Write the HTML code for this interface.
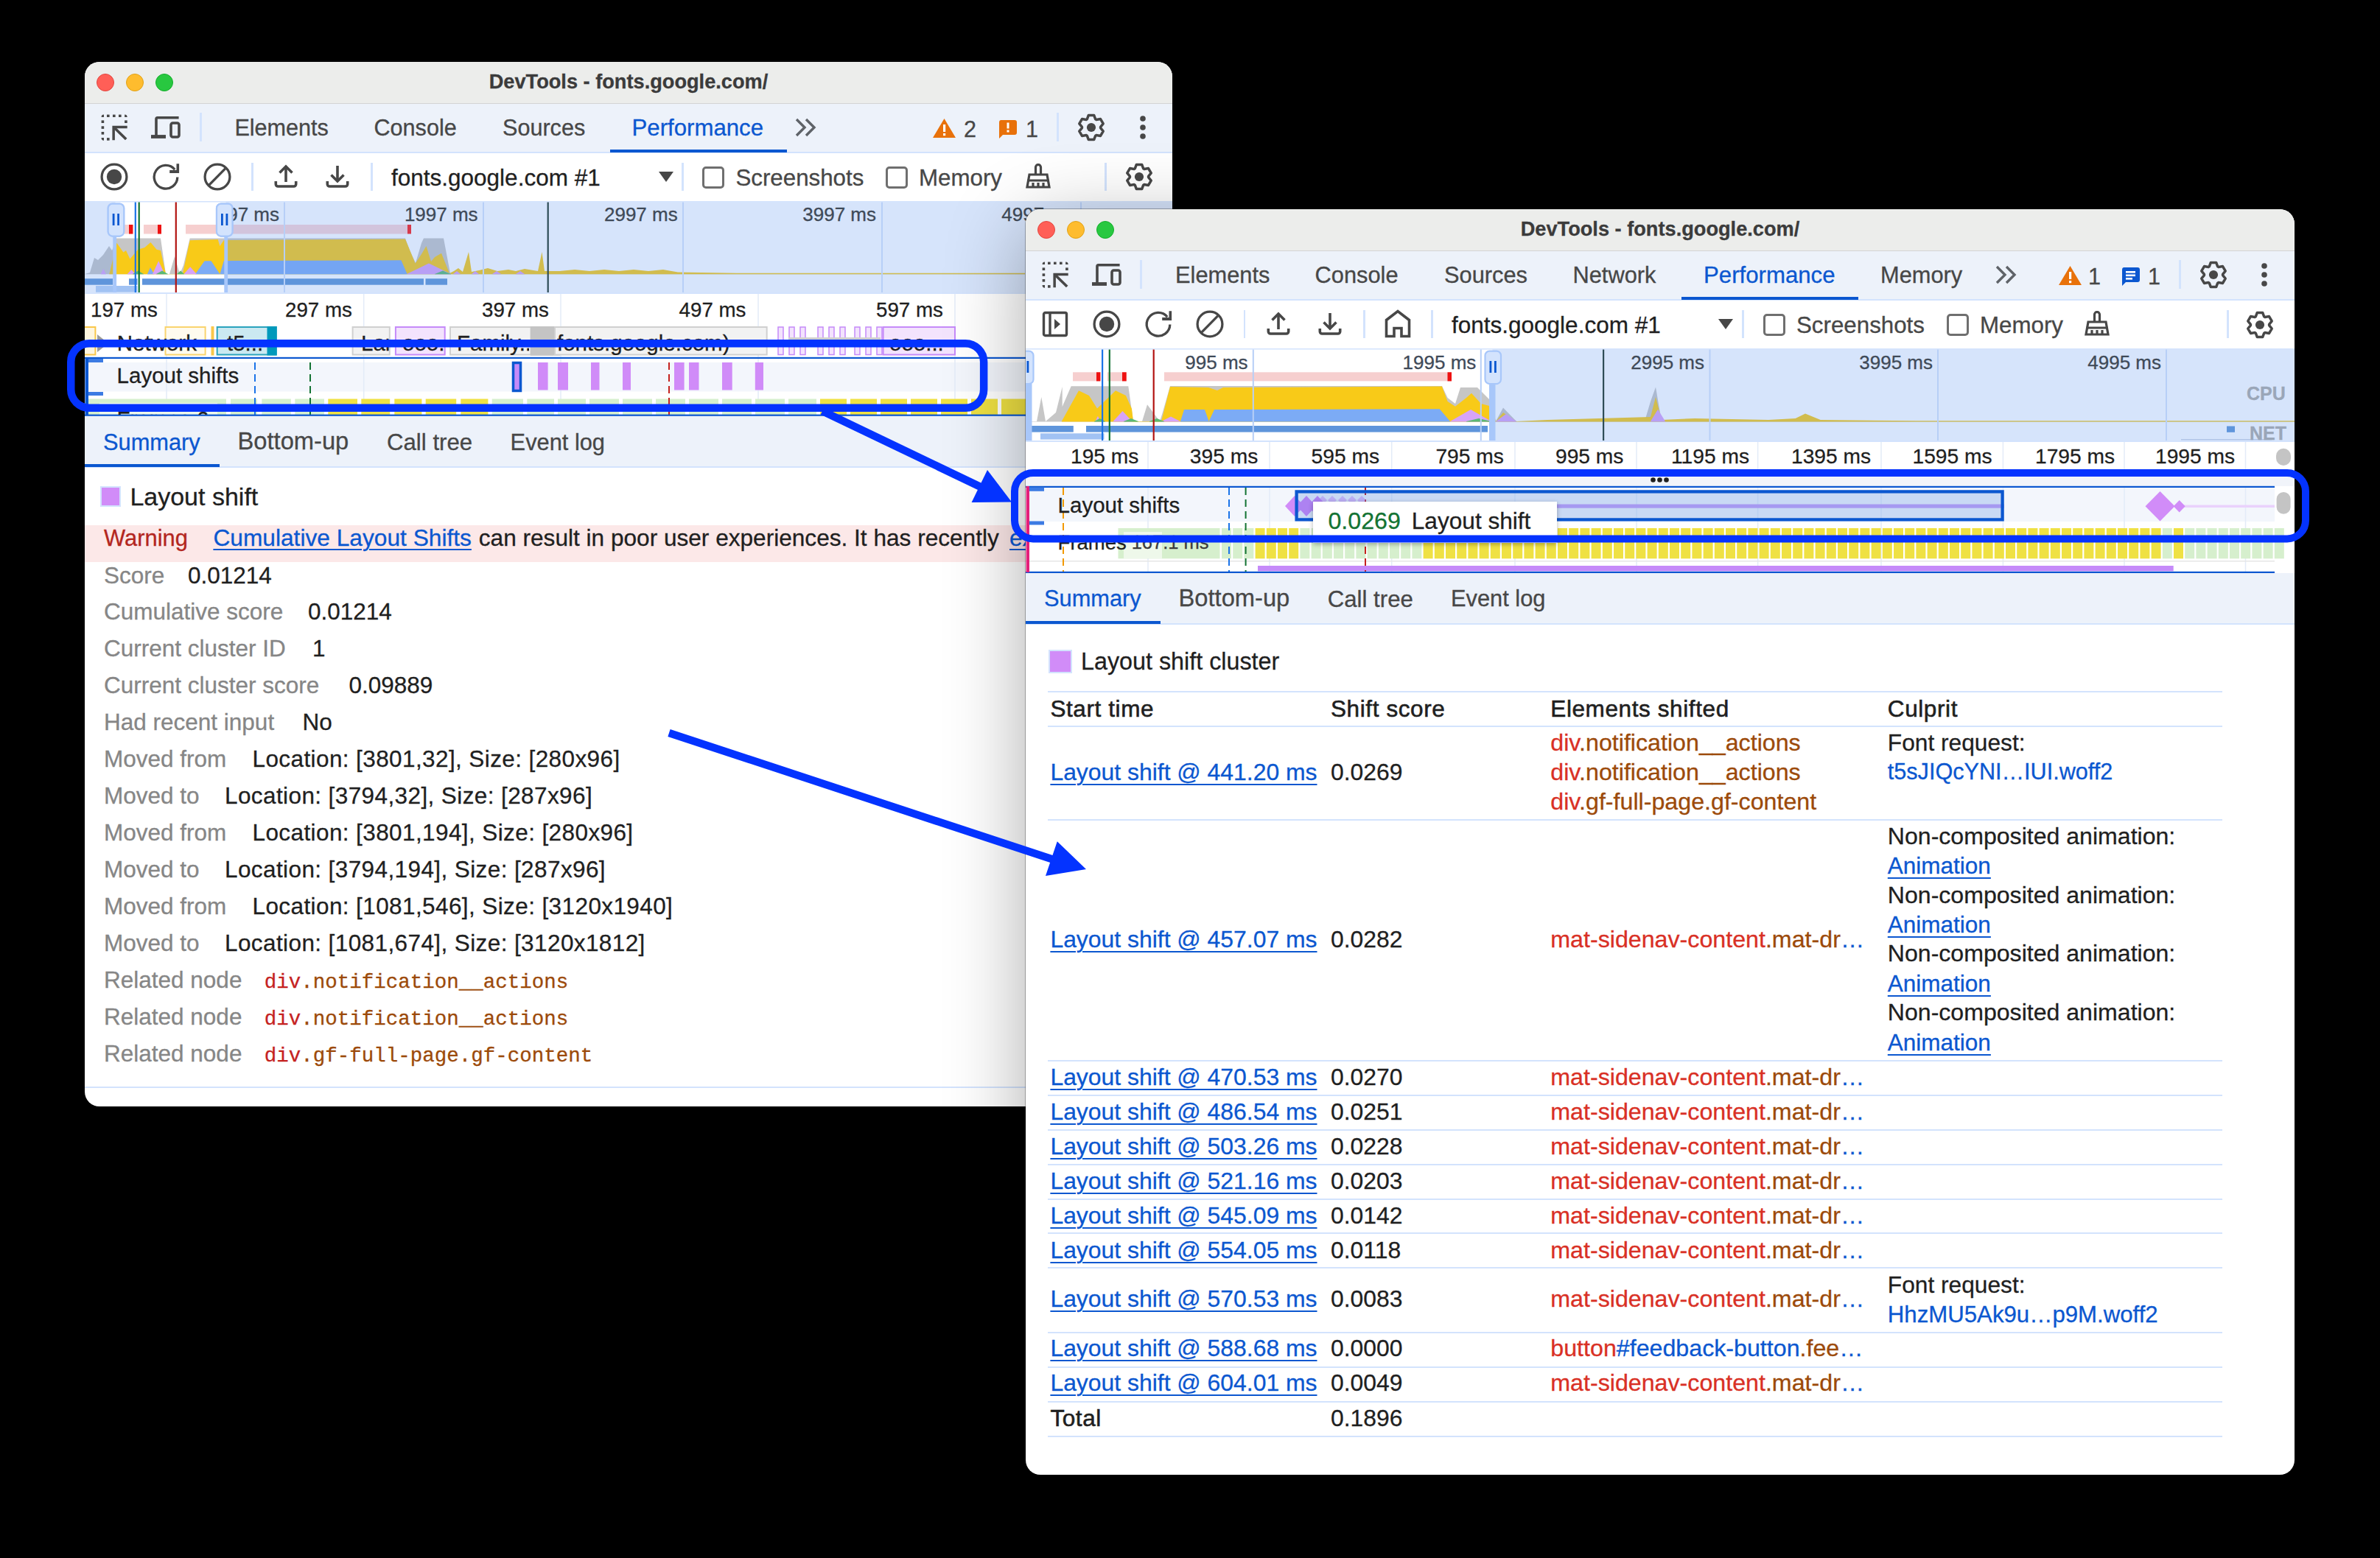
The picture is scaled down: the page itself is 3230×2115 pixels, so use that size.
<!DOCTYPE html><html><head><meta charset="utf-8"><style>html,body{margin:0;padding:0;width:3230px;height:2115px;overflow:hidden;background:#000}.t{position:absolute;line-height:1;white-space:nowrap;-webkit-text-stroke:0.3px currentColor}</style></head><body><div style="position:absolute;left:0;top:0;width:3230px;height:2115px;background:#000"></div>
<div style="position:absolute;left:115px;top:84px;width:1476px;height:1418px;border-radius:20px;background:#fff;overflow:hidden;z-index:1;"><div style="position:absolute;left:-115px;top:-84px;width:3230px;height:2115px">
<div style="position:absolute;left:115px;top:84px;width:1476px;height:55.5px;background:#ecedeb;"></div>
<div style="position:absolute;left:115px;top:139.5px;width:1476px;height:1.5px;background:#d4d4d4;"></div>
<div class="t" style="left:-647.0px;width:3000px;text-align:center;top:97px;font-size:27.2px;color:#3b3b3b;font-weight:bold;font-family:'Liberation Sans', sans-serif;">DevTools - fonts.google.com/</div>
<div style="position:absolute;left:131px;top:100px;width:24px;height:24px;box-sizing:border-box;border-radius:50%;background:#ff5f57;border:0.8px solid #e2463f"></div>
<div style="position:absolute;left:171px;top:100px;width:24px;height:24px;box-sizing:border-box;border-radius:50%;background:#febc2e;border:0.8px solid #e1a116"></div>
<div style="position:absolute;left:211px;top:100px;width:24px;height:24px;box-sizing:border-box;border-radius:50%;background:#28c840;border:0.8px solid #14ae2b"></div>
<div style="position:absolute;left:115px;top:141px;width:1476px;height:65px;background:#edf2fa;"></div>
<div style="position:absolute;left:115px;top:206px;width:1476px;height:2px;background:#d3e3fd;"></div>
<div style="position:absolute;left:115px;top:208px;width:1476px;height:64px;background:#fff;"></div>
<svg style="position:absolute;left:137px;top:155px;" width="36" height="36" viewBox="0 0 36 36"><g fill="#474747"><rect x="8" y="0.6" width="3.6" height="3.4"/><rect x="16" y="0.6" width="3.6" height="3.4"/><rect x="24" y="0.6" width="3.6" height="3.4"/><rect x="0.6" y="8.4" width="3.6" height="3.6"/><rect x="0.6" y="16.3" width="3.6" height="3.6"/><rect x="0.6" y="24" width="3.6" height="3.6"/><rect x="32.1" y="8.4" width="3.6" height="3.6"/><rect x="8" y="32.1" width="3.6" height="3.6"/><path d="M0.6 4 A3.4 3.4 0 0 1 4 0.6 V4 Z"/><path d="M32.1 0.6 A3.6 3.6 0 0 1 35.7 4 H32.1 Z"/><path d="M0.6 32.1 H4 V35.7 A3.4 3.4 0 0 1 0.6 32.1 Z"/><path d="M15.4 15.8 H35.7 V19.2 H18.9 V35.3 H15.4 Z"/></g><path d="M17.5 17.8 L34.2 34" stroke="#474747" stroke-width="3.6"/></svg>
<svg style="position:absolute;left:205px;top:155px;" width="42" height="34" viewBox="0 0 42 34"><g fill="#474747"><path d="M5.2 6.5 A3.5 3.5 0 0 1 8.7 3 H37.6 V6.6 H8.8 V31 H5.2 Z"/><rect x="0" y="28.1" width="20" height="4.8"/></g><rect x="27" y="12" width="11" height="19" rx="2.5" fill="none" stroke="#474747" stroke-width="3.6"/></svg>
<div style="position:absolute;left:271px;top:153px;width:2.5px;height:39px;background:#d3e3fd;"></div>
<div class="t" style="left:318.4px;top:158px;font-size:30.6px;color:#474747;font-weight:normal;font-family:'Liberation Sans', sans-serif;">Elements</div>
<div class="t" style="left:507.5px;top:158px;font-size:30.6px;color:#474747;font-weight:normal;font-family:'Liberation Sans', sans-serif;">Console</div>
<div class="t" style="left:682px;top:158px;font-size:30.6px;color:#474747;font-weight:normal;font-family:'Liberation Sans', sans-serif;">Sources</div>
<div class="t" style="left:857.5px;top:158px;font-size:31.2px;color:#0b57d0;font-weight:normal;font-family:'Liberation Sans', sans-serif;">Performance</div>
<div style="position:absolute;left:828px;top:202.5px;width:240px;height:4px;background:#0b57d0;"></div>
<svg style="position:absolute;left:1079px;top:160px;" width="30" height="26" viewBox="0 0 30 26"><g fill="none" stroke="#5f6368" stroke-width="3.4"><path d="M2 2 L13 13 L2 24"/><path d="M15 2 L26 13 L15 24"/></g></svg>
<svg style="position:absolute;left:1266px;top:160px;" width="31" height="28" viewBox="0 0 31 28"><path d="M15.5 1 L31 27 H0 Z" fill="#e8710a"/><rect x="14" y="9" width="3.2" height="10" fill="#fff"/><rect x="14" y="21" width="3.2" height="3.2" fill="#fff"/></svg>
<div class="t" style="left:1308px;top:160px;font-size:30.6px;color:#474747;font-weight:normal;font-family:'Liberation Sans', sans-serif;">2</div>
<svg style="position:absolute;left:1355px;top:162.5px;" width="26" height="26" viewBox="0 0 26 26"><path d="M3 0 H22 A3 3 0 0 1 25 3 V17 A3 3 0 0 1 22 20 H6 L1 25 V3 A3 3 0 0 1 3 0 Z" fill="#e8710a"/><rect x="11.5" y="3.5" width="3" height="8" fill="#fff"/><rect x="11.5" y="13.5" width="3" height="3" fill="#fff"/></svg>
<div class="t" style="left:1392px;top:160px;font-size:30.6px;color:#474747;font-weight:normal;font-family:'Liberation Sans', sans-serif;">1</div>
<div style="position:absolute;left:1434px;top:153px;width:2.5px;height:39px;background:#d3e3fd;"></div>
<svg style="position:absolute;left:1461px;top:153px;" width="40" height="40" viewBox="0 0 40 40"><polygon points="14.28,8.77 16.32,3.40 23.68,3.40 25.72,8.77 26.86,9.43 32.53,8.51 36.21,14.89 32.58,19.34 32.58,20.66 36.21,25.11 32.53,31.49 26.86,30.57 25.72,31.23 23.68,36.60 16.32,36.60 14.28,31.23 13.14,30.57 7.47,31.49 3.79,25.11 7.42,20.66 7.42,19.34 3.79,14.89 7.47,8.51 13.14,9.43" fill="none" stroke="#474747" stroke-width="3.5" stroke-linejoin="round"/><circle cx="20" cy="20" r="6.1" fill="#474747"/></svg>
<svg style="position:absolute;left:1545px;top:156px;" width="12" height="34" viewBox="0 0 12 34"><circle cx="6" cy="5" r="3.8" fill="#474747"/><circle cx="6" cy="17" r="3.8" fill="#474747"/><circle cx="6" cy="29" r="3.8" fill="#474747"/></svg>
<svg style="position:absolute;left:135px;top:220px;" width="40" height="40" viewBox="0 0 40 40"><circle cx="20" cy="20" r="16.9" fill="none" stroke="#474747" stroke-width="3.3"/><circle cx="20" cy="20" r="10.2" fill="#474747"/></svg>
<svg style="position:absolute;left:205px;top:220px;" width="40" height="40" viewBox="0 0 40 40"><path d="M35.8 20.5 A15.8 15.8 0 1 1 32.2 10.2" fill="none" stroke="#474747" stroke-width="3.3"/><path d="M34.5 2.2 H38.1 V15.1 H25.2 V11.1 H34.5 Z" fill="#474747"/></svg>
<svg style="position:absolute;left:275px;top:220px;" width="40" height="40" viewBox="0 0 40 40"><circle cx="20" cy="20" r="16.9" fill="none" stroke="#474747" stroke-width="3.3"/><path d="M8.8 31.2 L30.7 8.8" stroke="#474747" stroke-width="3.3"/></svg>
<div style="position:absolute;left:341px;top:221px;width:2.5px;height:38px;background:#d3e3fd;"></div>
<svg style="position:absolute;left:370px;top:222px;" width="36" height="36" viewBox="0 0 36 36"><g fill="none" stroke="#474747" stroke-width="3.6"><path d="M18 25 V4.5"/><path d="M9.5 12.5 L18 4 L26.5 12.5"/><path d="M4.3 24 V28 A3 3 0 0 0 7.3 31 H28.7 A3 3 0 0 0 31.7 28 V24"/></g></svg>
<svg style="position:absolute;left:440px;top:222px;" width="36" height="36" viewBox="0 0 36 36"><g fill="none" stroke="#474747" stroke-width="3.6"><path d="M18 3 V23.5"/><path d="M9.5 15.5 L18 24 L26.5 15.5"/><path d="M4.3 24 V28 A3 3 0 0 0 7.3 31 H28.7 A3 3 0 0 0 31.7 28 V24"/></g></svg>
<div style="position:absolute;left:503px;top:221px;width:2.5px;height:38px;background:#d3e3fd;"></div>
<div class="t" style="left:531px;top:226px;font-size:31.5px;color:#1f1f1f;font-weight:normal;font-family:'Liberation Sans', sans-serif;">fonts.google.com #1</div>
<svg style="position:absolute;left:894px;top:233px;" width="20" height="14" viewBox="0 0 20 14"><path d="M0 0 H20 L10 14 Z" fill="#474747"/></svg>
<div style="position:absolute;left:925px;top:221px;width:2.5px;height:38px;background:#d3e3fd;"></div>
<div style="position:absolute;left:953px;top:225.5px;width:24px;height:24px;border:3px solid #6f6f6f;border-radius:5px;background:#fff"></div>
<div class="t" style="left:998.4px;top:226px;font-size:31.3px;color:#474747;font-weight:normal;font-family:'Liberation Sans', sans-serif;">Screenshots</div>
<div style="position:absolute;left:1201.5px;top:225.5px;width:24px;height:24px;border:3px solid #6f6f6f;border-radius:5px;background:#fff"></div>
<div class="t" style="left:1247px;top:226px;font-size:31.3px;color:#474747;font-weight:normal;font-family:'Liberation Sans', sans-serif;">Memory</div>
<svg style="position:absolute;left:1391px;top:222px;" width="36" height="36" viewBox="0 0 36 36"><g fill="none" stroke="#474747" stroke-width="3.2"><path d="M14.5 14 V5 A3.5 3.5 0 0 1 21.5 5 V14"/><path d="M6 15 H30 L33 32 H3 Z"/><path d="M3.5 23 H32.5"/><path d="M11 26 V32"/><path d="M18 26 V32"/><path d="M25 26 V32"/></g></svg>
<div style="position:absolute;left:1499px;top:221px;width:2.5px;height:38px;background:#d3e3fd;"></div>
<svg style="position:absolute;left:1526px;top:220px;" width="40" height="40" viewBox="0 0 40 40"><polygon points="14.28,8.77 16.32,3.40 23.68,3.40 25.72,8.77 26.86,9.43 32.53,8.51 36.21,14.89 32.58,19.34 32.58,20.66 36.21,25.11 32.53,31.49 26.86,30.57 25.72,31.23 23.68,36.60 16.32,36.60 14.28,31.23 13.14,30.57 7.47,31.49 3.79,25.11 7.42,20.66 7.42,19.34 3.79,14.89 7.47,8.51 13.14,9.43" fill="none" stroke="#474747" stroke-width="3.5" stroke-linejoin="round"/><circle cx="20" cy="20" r="6.1" fill="#474747"/></svg>
<svg style="position:absolute;left:0;top:0" width="3230" height="2115"><rect x="115" y="273" width="1476" height="125" fill="#fff"/><rect x="115" y="273" width="1476" height="1.5" fill="#d3e3fd"/><polygon points="115,372.3 115,372 122,370 128,350 133,353 140,346 148,334 152,340 156,330 158,323.5 218,323.5 225,372 230,372 237,348 244,372 249,360 257.7,323.5 550,323.5 556,340 564,357 572,330 575,323.5 602,323.5 611,371 1391,371 1391,372.3" fill="#c6c6c6" /><polygon points="148.4,372.3 148.4,372 158.4,329.8 167.4,342.5 171,340 176.4,351.5 187.3,338.8 196.3,336 204.4,329 212.6,338.8 218,340 225,372 247.8,372 257.7,326.2 295.7,325 298.4,334 303.8,326 550,324.4 563.6,357.4 572,345 578.5,334 585,355 590,349 599,343.8 610,371 616,368 622,364 628,369 636,342 640,369 650,367 662,364 675,368 690,366 700,368 712,365 730,368 735.5,342 739,368 760,368 780,366 800,368 820,366 840,368 860,366 880,368 900,366 920,369.5 1000,370.8 1391,370.8 1391,372.3" fill="#f8ca18" /><polygon points="200,372.3 200,372 204,363 209,372 209,372.3" fill="#7cabf5" /><polygon points="265,372.3 265,372 277.6,354.2 286.6,354.2 298.4,372 303.8,354 544.4,353.3 552.6,372 552.6,372.3" fill="#7cabf5" /><polygon points="136.7,372.3 136.7,372 140.3,365 143.9,372 143.9,372.3" fill="#d7a3f7" /><polygon points="172.8,372.3 172.8,372 178.25,366 183.7,372 183.7,372.3" fill="#d7a3f7" /><polygon points="207,372.3 207,372 215.2,354.2 223.4,372 223.4,372.3" fill="#d7a3f7" /><polygon points="249.6,372.3 249.6,372 258.2,362.3 266.8,372 266.8,372.3" fill="#d7a3f7" /><polygon points="552,372.3 552,372 582.0,357.4 612,372 612,372.3" fill="#d7a3f7" /><polygon points="615,372.3 615,372 620.0,368 625,372 625,372.3" fill="#d7a3f7" /><polygon points="640,372.3 640,372 645.0,368 650,372 650,372.3" fill="#d7a3f7" /><polygon points="668,372.3 668,372 674.0,368 680,372 680,372.3" fill="#d7a3f7" /><polygon points="700,372.3 700,372 706.0,368 712,372 712,372.3" fill="#d7a3f7" /><polygon points="180,372.3 180,372 187.5,367.5 195,372 195,372.3" fill="#5bb974" /><polygon points="212,372.3 212,372 220.0,367.5 228,372 228,372.3" fill="#5bb974" /><polygon points="240,372.3 240,372 245.0,367.5 250,372 250,372.3" fill="#5bb974" /><polygon points="590,372.3 590,372 601.0,367.5 612,372 612,372.3" fill="#5bb974" /><rect x="115" y="274.5" width="41.5" height="123" fill="rgb(91,147,239)" fill-opacity="0.25"/><rect x="306.5" y="274.5" width="1285" height="123" fill="rgb(91,147,239)" fill-opacity="0.25"/><rect x="169" y="305" width="11.400000000000006" height="12.5" fill="#f6cfcf"/><rect x="175" y="305" width="5.400000000000006" height="12.5" fill="#ee1111"/><rect x="195" y="305" width="24" height="12.5" fill="#f6cfcf"/><rect x="214" y="305" width="5" height="12.5" fill="#ee1111"/><rect x="252" y="305" width="52" height="12.5" fill="#f6cfcf"/><rect x="304" y="305" width="249" height="12.5" fill="#d2c4dc"/><rect x="553" y="305" width="5" height="12.5" fill="#d63a4c"/><rect x="115" y="378.2" width="38" height="8.5" fill="#5f95db"/><rect x="175" y="378.2" width="11.400000000000006" height="8.5" fill="#5f95db"/><rect x="193" y="378.2" width="382" height="8.5" fill="#5f95db"/><rect x="577.5" y="378.2" width="29.5" height="8.5" fill="#5f95db"/><rect x="130" y="388" width="56.4" height="8.7" fill="#a1c2f3"/><rect x="385" y="274.5" width="2" height="123" fill="#b7cff7"/><rect x="655" y="274.5" width="2" height="123" fill="#b7cff7"/><rect x="926" y="274.5" width="2" height="123" fill="#b7cff7"/><rect x="1196" y="274.5" width="2" height="123" fill="#b7cff7"/><rect x="1466" y="274.5" width="2" height="123" fill="#b7cff7"/><rect x="742.6" y="274.5" width="2.2" height="123" fill="#2f4d57"/><rect x="182.7" y="274.5" width="2.2" height="123" fill="#1a73e8"/><rect x="187.6" y="274.5" width="2.2" height="123" fill="#137333"/><rect x="237.7" y="274.5" width="2.2" height="123" fill="#b31412"/><rect x="153.3" y="321" width="4.8" height="77" fill="#a8c7fa"/><rect x="146.7" y="276.6" width="21.5" height="44" rx="6" fill="#d3e3fd" stroke="#a8c7fa" stroke-width="2.2"/><rect x="152.7" y="290" width="2.8" height="16" fill="#0b57d0"/><rect x="159.2" y="290" width="2.8" height="16" fill="#0b57d0"/><rect x="304.3" y="321" width="4.8" height="77" fill="#a8c7fa"/><rect x="294" y="276.6" width="21.5" height="44" rx="6" fill="#d3e3fd" stroke="#a8c7fa" stroke-width="2.2"/><rect x="300" y="290" width="2.8" height="16" fill="#0b57d0"/><rect x="306.5" y="290" width="2.8" height="16" fill="#0b57d0"/><rect x="115" y="397" width="1476" height="2" fill="#d3e3fd"/></svg>
<div class="t" style="right:2851px;top:278px;font-size:26px;color:#3f4a58;font-weight:normal;font-family:'Liberation Sans', sans-serif;">997 ms</div>
<div class="t" style="right:2581.4px;top:278px;font-size:26px;color:#3f4a58;font-weight:normal;font-family:'Liberation Sans', sans-serif;">1997 ms</div>
<div class="t" style="right:2310.3px;top:278px;font-size:26px;color:#3f4a58;font-weight:normal;font-family:'Liberation Sans', sans-serif;">2997 ms</div>
<div class="t" style="right:2041px;top:278px;font-size:26px;color:#3f4a58;font-weight:normal;font-family:'Liberation Sans', sans-serif;">3997 ms</div>
<div class="t" style="right:1771px;top:278px;font-size:26px;color:#3f4a58;font-weight:normal;font-family:'Liberation Sans', sans-serif;">4997 ms</div>
<svg style="position:absolute;left:0;top:0" width="3230" height="2115"><rect x="146.7" y="276.6" width="21.5" height="44" rx="6" fill="#d3e3fd" stroke="#a8c7fa" stroke-width="2.2"/><rect x="152.7" y="290" width="2.8" height="16" fill="#0b57d0"/><rect x="159.2" y="290" width="2.8" height="16" fill="#0b57d0"/><rect x="294" y="276.6" width="21.5" height="44" rx="6" fill="#d3e3fd" stroke="#a8c7fa" stroke-width="2.2"/><rect x="300" y="290" width="2.8" height="16" fill="#0b57d0"/><rect x="306.5" y="290" width="2.8" height="16" fill="#0b57d0"/></svg>
<svg style="position:absolute;left:0;top:0" width="3230" height="2115"><rect x="115" y="399" width="1476" height="43" fill="#fff"/><rect x="225.25" y="399" width="1.5" height="165" fill="#e3ebf8"/><rect x="492.95" y="399" width="1.5" height="165" fill="#e3ebf8"/><rect x="760.25" y="399" width="1.5" height="165" fill="#e3ebf8"/><rect x="1028.25" y="399" width="1.5" height="165" fill="#e3ebf8"/><rect x="1295.25" y="399" width="1.5" height="165" fill="#e3ebf8"/><rect x="1562.25" y="399" width="1.5" height="165" fill="#e3ebf8"/></svg>
<div class="t" style="left:123px;top:407px;font-size:27.7px;color:#1f1f1f;font-weight:normal;font-family:'Liberation Sans', sans-serif;">197 ms</div>
<div class="t" style="left:387px;top:407px;font-size:27.7px;color:#1f1f1f;font-weight:normal;font-family:'Liberation Sans', sans-serif;">297 ms</div>
<div class="t" style="left:654px;top:407px;font-size:27.7px;color:#1f1f1f;font-weight:normal;font-family:'Liberation Sans', sans-serif;">397 ms</div>
<div class="t" style="left:921.6px;top:407px;font-size:27.7px;color:#1f1f1f;font-weight:normal;font-family:'Liberation Sans', sans-serif;">497 ms</div>
<div class="t" style="left:1189px;top:407px;font-size:27.7px;color:#1f1f1f;font-weight:normal;font-family:'Liberation Sans', sans-serif;">597 ms</div>
<div class="t" style="left:1456px;top:407px;font-size:27.7px;color:#1f1f1f;font-weight:normal;font-family:'Liberation Sans', sans-serif;">697 ms</div>
<svg style="position:absolute;left:0;top:0" width="3230" height="2115"><rect x="111" y="444" width="18.400000000000006" height="37.5" fill="#fef6df" stroke="#f9c74a" stroke-width="2"/><path d="M132 454 L147 466 L132 478 Z" fill="#9a9a9a"/><rect x="224.5" y="444" width="54.10000000000002" height="37.5" fill="#fffbee" stroke="#f9d46e" stroke-width="2"/><rect x="287.5" y="444" width="2.0" height="37.5" fill="#fef6df" stroke="#f9c74a" stroke-width="2"/><rect x="294.7" y="444" width="80.0" height="37.5" fill="#cbe9f1" stroke="#2aa3bd" stroke-width="2"/><rect x="362.5" y="443" width="13.199999999999989" height="39.5" fill="#0099bb"/><rect x="478.6" y="444" width="50.19999999999993" height="37.5" fill="#f2f2f2" stroke="#d0d0d0" stroke-width="2"/><rect x="536.9" y="444" width="66.80000000000007" height="37.5" fill="#f3e3fd" stroke="#c58af9" stroke-width="2"/><rect x="611" y="444" width="148" height="37.5" fill="#f2f2f2" stroke="#d0d0d0" stroke-width="2"/><rect x="719.8" y="443" width="40.200000000000045" height="39.5" fill="#c4c4c4"/><rect x="753" y="444" width="287.70000000000005" height="37.5" fill="#f2f2f2" stroke="#d0d0d0" stroke-width="2"/><rect x="719.8" y="443" width="31" height="39.5" fill="#c4c4c4"/><rect x="1056" y="444" width="7" height="37.5" fill="#f3e3fd" stroke="#c58af9" stroke-width="1.5"/><rect x="1071" y="444" width="7" height="37.5" fill="#f3e3fd" stroke="#c58af9" stroke-width="1.5"/><rect x="1086" y="444" width="7" height="37.5" fill="#f3e3fd" stroke="#c58af9" stroke-width="1.5"/><rect x="1110" y="444" width="7" height="37.5" fill="#f3e3fd" stroke="#c58af9" stroke-width="1.5"/><rect x="1125" y="444" width="7" height="37.5" fill="#f3e3fd" stroke="#c58af9" stroke-width="1.5"/><rect x="1140" y="444" width="7" height="37.5" fill="#f3e3fd" stroke="#c58af9" stroke-width="1.5"/><rect x="1160" y="444" width="7" height="37.5" fill="#f3e3fd" stroke="#c58af9" stroke-width="1.5"/><rect x="1175" y="444" width="7" height="37.5" fill="#f3e3fd" stroke="#c58af9" stroke-width="1.5"/><rect x="1190" y="444" width="7" height="37.5" fill="#f3e3fd" stroke="#c58af9" stroke-width="1.5"/><rect x="1070" y="458" width="125" height="6" fill="#cfcfcf"/><rect x="1198.6" y="444" width="97.40000000000009" height="37.5" fill="#f3e3fd" stroke="#c58af9" stroke-width="2"/></svg>
<div style="position:absolute;left:158.7px;top:443px;width:200px;height:39px;overflow:hidden">
<div class="t" style="left:0;top:7.5px;font-size:29.5px;color:#1f1f1f;font-family:'Liberation Sans', sans-serif">Network</div></div>
<div style="position:absolute;left:308px;top:443px;width:54px;height:39px;overflow:hidden">
<div class="t" style="left:0;top:7.5px;font-size:29.5px;color:#1f1f1f;font-family:'Liberation Sans', sans-serif">t5...</div></div>
<div style="position:absolute;left:490px;top:443px;width:38px;height:39px;overflow:hidden">
<div class="t" style="left:0;top:7.5px;font-size:29.5px;color:#1f1f1f;font-family:'Liberation Sans', sans-serif">Lar</div></div>
<div style="position:absolute;left:546px;top:443px;width:58px;height:39px;overflow:hidden">
<div class="t" style="left:0;top:7.5px;font-size:29.5px;color:#1f1f1f;font-family:'Liberation Sans', sans-serif">ooo...</div></div>
<div style="position:absolute;left:620px;top:443px;width:98px;height:39px;overflow:hidden">
<div class="t" style="left:0;top:7.5px;font-size:29.5px;color:#1f1f1f;font-family:'Liberation Sans', sans-serif">Family...</div></div>
<div style="position:absolute;left:756px;top:443px;width:280px;height:39px;overflow:hidden">
<div class="t" style="left:0;top:7.5px;font-size:29.5px;color:#1f1f1f;font-family:'Liberation Sans', sans-serif">fonts.google.com)</div></div>
<div style="position:absolute;left:1207px;top:443px;width:88px;height:39px;overflow:hidden">
<div class="t" style="left:0;top:7.5px;font-size:29.5px;color:#1f1f1f;font-family:'Liberation Sans', sans-serif">ooo...</div></div>
<svg style="position:absolute;left:0;top:0" width="3230" height="2115"><rect x="115" y="484.5" width="1476" height="80" fill="#fff"/><rect x="120" y="492" width="1471" height="39.5" fill="#f3f6fc"/><rect x="225.25" y="486" width="1.5" height="78" fill="#e3ebf8"/><rect x="492.95" y="486" width="1.5" height="78" fill="#e3ebf8"/><rect x="760.25" y="486" width="1.5" height="78" fill="#e3ebf8"/><rect x="1028.25" y="486" width="1.5" height="78" fill="#e3ebf8"/><rect x="1295.25" y="486" width="1.5" height="78" fill="#e3ebf8"/><rect x="1562.25" y="486" width="1.5" height="78" fill="#e3ebf8"/><rect x="120" y="541.5" width="187" height="22" fill="#d6efcd"/><rect x="313" y="541.5" width="36" height="22" fill="#d6efcd"/><rect x="355.3" y="541.5" width="39.5" height="22" fill="#d6efcd"/><rect x="400.3" y="541.5" width="39.69999999999999" height="22" fill="#d6efcd"/><rect x="667.7" y="541.5" width="42.299999999999955" height="22" fill="#d6efcd"/><rect x="715.3" y="541.5" width="36.700000000000045" height="22" fill="#d6efcd"/><rect x="757" y="541.5" width="38" height="22" fill="#d6efcd"/><rect x="800" y="541.5" width="40" height="22" fill="#d6efcd"/><rect x="845" y="541.5" width="40" height="22" fill="#d6efcd"/><rect x="890" y="541.5" width="40" height="22" fill="#d6efcd"/><rect x="935" y="541.5" width="40" height="22" fill="#d6efcd"/><rect x="980" y="541.5" width="40" height="22" fill="#d6efcd"/><rect x="1025" y="541.5" width="40" height="22" fill="#d6efcd"/><rect x="1070" y="541.5" width="38" height="22" fill="#d6efcd"/><rect x="445.3" y="541.5" width="39.69999999999999" height="22" fill="#efe143"/><rect x="490.3" y="541.5" width="38.900000000000034" height="22" fill="#efe143"/><rect x="535.3" y="541.5" width="37.10000000000002" height="22" fill="#efe143"/><rect x="577.7" y="541.5" width="41.5" height="22" fill="#efe143"/><rect x="625.3" y="541.5" width="37.10000000000002" height="22" fill="#efe143"/><rect x="1113" y="541.5" width="36" height="22" fill="#efe143"/><rect x="1154" y="541.5" width="36" height="22" fill="#efe143"/><rect x="1195" y="541.5" width="36" height="22" fill="#efe143"/><rect x="1236" y="541.5" width="36" height="22" fill="#efe143"/><rect x="1277" y="541.5" width="36" height="22" fill="#efe143"/><rect x="1318" y="541.5" width="36" height="22" fill="#efe143"/><rect x="1359" y="541.5" width="36" height="22" fill="#efe143"/><rect x="135" y="547" width="160" height="17" fill="#eef8ea"/><line x1="346" y1="492" x2="346" y2="564" stroke="#1a73e8" stroke-width="2" stroke-dasharray="10 6"/><line x1="421" y1="492" x2="421" y2="564" stroke="#137333" stroke-width="2" stroke-dasharray="10 6"/><line x1="908" y1="492" x2="908" y2="564" stroke="#c5221f" stroke-width="2" stroke-dasharray="10 6"/><rect x="696.5" y="492.5" width="10" height="38" fill="#c58af9" stroke="#0b57d0" stroke-width="3.5"/><rect x="730" y="492" width="13.600000000000023" height="37.5" fill="#d08bf8"/><rect x="757" y="492" width="14" height="37.5" fill="#d08bf8"/><rect x="802" y="492" width="11.5" height="37.5" fill="#d08bf8"/><rect x="845" y="492" width="11" height="37.5" fill="#d08bf8"/><rect x="915" y="492" width="13.600000000000023" height="37.5" fill="#d08bf8"/><rect x="935" y="492" width="13.5" height="37.5" fill="#d08bf8"/><rect x="980" y="492" width="13.700000000000045" height="37.5" fill="#d08bf8"/><rect x="1024.8" y="492" width="11.200000000000045" height="37.5" fill="#d08bf8"/><rect x="115" y="484.8" width="1476" height="2.2" fill="#0b57d0"/><rect x="115" y="562.6" width="1476" height="2.2" fill="#0b57d0"/><rect x="115.5" y="485" width="4.5" height="79" fill="#0b57d0"/><rect x="120" y="487" width="20" height="5" fill="#3c7be3"/><rect x="120" y="532" width="20" height="5" fill="#3c7be3"/></svg>
<div class="t" style="left:158.6px;top:495px;font-size:29.5px;color:#1f1f1f;font-weight:normal;font-family:'Liberation Sans', sans-serif;">Layout shifts</div>
<div style="position:absolute;left:115px;top:540px;width:600px;height:22.5px;overflow:hidden">
<div class="t" style="left:43.6px;top:14px;font-size:29.5px;color:#1f1f1f;font-family:'Liberation Sans',sans-serif">Frames 6</div></div>
<div style="position:absolute;left:115px;top:564.8px;width:1476px;height:68.5px;background:#edf2fa;"></div>
<div style="position:absolute;left:115px;top:632.5px;width:1476px;height:2px;background:#d3e3fd;"></div>
<div class="t" style="left:140px;top:586px;font-size:30.8px;color:#0b57d0;font-weight:normal;font-family:'Liberation Sans', sans-serif;">Summary</div>
<div class="t" style="left:322.5px;top:583px;font-size:32.7px;color:#474747;font-weight:normal;font-family:'Liberation Sans', sans-serif;">Bottom-up</div>
<div class="t" style="left:525px;top:585px;font-size:31.2px;color:#474747;font-weight:normal;font-family:'Liberation Sans', sans-serif;">Call tree</div>
<div class="t" style="left:692.6px;top:586px;font-size:30.8px;color:#474747;font-weight:normal;font-family:'Liberation Sans', sans-serif;">Event log</div>
<div style="position:absolute;left:115px;top:629.5px;width:182.5px;height:4.5px;background:#0b57d0;"></div>
<div style="position:absolute;left:136px;top:659.6px;width:24px;height:24px;background:#d18cf8;border:2px solid #d3e3fd"></div>
<div class="t" style="left:176.4px;top:657px;font-size:34px;color:#1f1f1f;font-weight:normal;font-family:'Liberation Sans', sans-serif;">Layout shift</div>
<div style="position:absolute;left:115px;top:713.4px;width:1476px;height:49.2px;background:#fce8e8;"></div>
<div class="t" style="left:141px;top:716px;font-size:30.9px;color:#b3261e;font-weight:normal;font-family:'Liberation Sans', sans-serif;">Warning</div>
<div class="t" style="left:289.4px;top:715px;font-size:31.7px;color:#0b57d0;font-weight:normal;font-family:'Liberation Sans', sans-serif;text-decoration:underline;text-decoration-thickness:2px;text-underline-offset:4px">Cumulative Layout Shifts</div>
<div class="t" style="left:649.8px;top:715px;font-size:31.6px;color:#1f1f1f;font-weight:normal;font-family:'Liberation Sans', sans-serif;">can result in poor user experiences. It has recently</div>
<div class="t" style="left:1370px;top:715px;font-size:31.6px;color:#0b57d0;font-weight:normal;font-family:'Liberation Sans', sans-serif;text-decoration:underline;text-decoration-thickness:2px;text-underline-offset:4px">experienced</div>
<div class="t" style="left:141px;top:766px;font-size:31.5px;color:#868686;font-weight:normal;font-family:'Liberation Sans', sans-serif;">Score</div>
<div class="t" style="left:255px;top:766px;font-size:31.5px;color:#1f1f1f;font-weight:normal;font-family:'Liberation Sans', sans-serif;">0.01214</div>
<div class="t" style="left:141px;top:815px;font-size:31.5px;color:#868686;font-weight:normal;font-family:'Liberation Sans', sans-serif;">Cumulative score</div>
<div class="t" style="left:418px;top:815px;font-size:31.5px;color:#1f1f1f;font-weight:normal;font-family:'Liberation Sans', sans-serif;">0.01214</div>
<div class="t" style="left:141px;top:865px;font-size:31.5px;color:#868686;font-weight:normal;font-family:'Liberation Sans', sans-serif;">Current cluster ID</div>
<div class="t" style="left:424px;top:865px;font-size:31.5px;color:#1f1f1f;font-weight:normal;font-family:'Liberation Sans', sans-serif;">1</div>
<div class="t" style="left:141px;top:915px;font-size:31.5px;color:#868686;font-weight:normal;font-family:'Liberation Sans', sans-serif;">Current cluster score</div>
<div class="t" style="left:473.5px;top:915px;font-size:31.5px;color:#1f1f1f;font-weight:normal;font-family:'Liberation Sans', sans-serif;">0.09889</div>
<div class="t" style="left:141px;top:965px;font-size:31.5px;color:#868686;font-weight:normal;font-family:'Liberation Sans', sans-serif;">Had recent input</div>
<div class="t" style="left:410.5px;top:965px;font-size:31.5px;color:#1f1f1f;font-weight:normal;font-family:'Liberation Sans', sans-serif;">No</div>
<div class="t" style="left:141px;top:1015px;font-size:31.5px;color:#868686;font-weight:normal;font-family:'Liberation Sans', sans-serif;">Moved from</div>
<div class="t" style="left:342.5px;top:1015px;font-size:31.5px;color:#1f1f1f;font-weight:normal;font-family:'Liberation Sans', sans-serif;letter-spacing:0.4px">Location: [3801,32], Size: [280x96]</div>
<div class="t" style="left:141px;top:1065px;font-size:31.5px;color:#868686;font-weight:normal;font-family:'Liberation Sans', sans-serif;">Moved to</div>
<div class="t" style="left:305px;top:1065px;font-size:31.5px;color:#1f1f1f;font-weight:normal;font-family:'Liberation Sans', sans-serif;letter-spacing:0.4px">Location: [3794,32], Size: [287x96]</div>
<div class="t" style="left:141px;top:1115px;font-size:31.5px;color:#868686;font-weight:normal;font-family:'Liberation Sans', sans-serif;">Moved from</div>
<div class="t" style="left:342.5px;top:1115px;font-size:31.5px;color:#1f1f1f;font-weight:normal;font-family:'Liberation Sans', sans-serif;letter-spacing:0.4px">Location: [3801,194], Size: [280x96]</div>
<div class="t" style="left:141px;top:1165px;font-size:31.5px;color:#868686;font-weight:normal;font-family:'Liberation Sans', sans-serif;">Moved to</div>
<div class="t" style="left:305px;top:1165px;font-size:31.5px;color:#1f1f1f;font-weight:normal;font-family:'Liberation Sans', sans-serif;letter-spacing:0.4px">Location: [3794,194], Size: [287x96]</div>
<div class="t" style="left:141px;top:1215px;font-size:31.5px;color:#868686;font-weight:normal;font-family:'Liberation Sans', sans-serif;">Moved from</div>
<div class="t" style="left:342.5px;top:1215px;font-size:31.5px;color:#1f1f1f;font-weight:normal;font-family:'Liberation Sans', sans-serif;letter-spacing:0.4px">Location: [1081,546], Size: [3120x1940]</div>
<div class="t" style="left:141px;top:1265px;font-size:31.5px;color:#868686;font-weight:normal;font-family:'Liberation Sans', sans-serif;">Moved to</div>
<div class="t" style="left:305px;top:1265px;font-size:31.5px;color:#1f1f1f;font-weight:normal;font-family:'Liberation Sans', sans-serif;letter-spacing:0.4px">Location: [1081,674], Size: [3120x1812]</div>
<div class="t" style="left:141px;top:1315px;font-size:31.5px;color:#868686;font-weight:normal;font-family:'Liberation Sans', sans-serif;">Related node</div>
<div class="t" style="left:358.7px;top:1320px;font-size:27.5px;color:#9c4a0a;font-weight:normal;font-family:'Liberation Mono', monospace;"><span style="color:#c5221f">div</span>.notification__actions</div>
<div class="t" style="left:141px;top:1365px;font-size:31.5px;color:#868686;font-weight:normal;font-family:'Liberation Sans', sans-serif;">Related node</div>
<div class="t" style="left:358.7px;top:1370px;font-size:27.5px;color:#9c4a0a;font-weight:normal;font-family:'Liberation Mono', monospace;"><span style="color:#c5221f">div</span>.notification__actions</div>
<div class="t" style="left:141px;top:1415px;font-size:31.5px;color:#868686;font-weight:normal;font-family:'Liberation Sans', sans-serif;">Related node</div>
<div class="t" style="left:358.7px;top:1420px;font-size:27.5px;color:#9c4a0a;font-weight:normal;font-family:'Liberation Mono', monospace;"><span style="color:#c5221f">div</span>.gf-full-page.gf-content</div>
<div style="position:absolute;left:115px;top:1474.5px;width:1476px;height:2px;background:#d3e3fd;"></div>
</div></div>
<svg style="position:absolute;left:0;top:0;z-index:10" width="3230" height="2115"><rect x="96.25" y="466.25" width="1238.9" height="87.5" rx="25" ry="25" fill="none" stroke="#0433ff" stroke-width="10.5"/><rect x="1377" y="642" width="1752" height="89.4" rx="25" ry="25" fill="none" stroke="#0433ff" stroke-width="10"/><line x1="1116" y1="558" x2="1335" y2="663" stroke="#0433ff" stroke-width="10.5"/><polygon points="1340,638 1318.6,682 1373,681.4" fill="#0433ff"/><line x1="908" y1="995" x2="1436" y2="1169" stroke="#0433ff" stroke-width="10.5"/><polygon points="1434.8,1142.3 1419,1189 1474,1180" fill="#0433ff"/></svg>
<div style="position:absolute;left:1392px;top:284px;width:1722px;height:1718px;border-radius:20px;background:#fff;overflow:hidden;z-index:2;box-shadow:0 0 0 1px rgba(0,0,0,0.28), 0 24px 110px 0 rgba(0,0,0,0.33)"><div style="position:absolute;left:-1392px;top:-284px;width:3230px;height:2115px">
<div style="position:absolute;left:1392px;top:284px;width:1722px;height:55.5px;background:#ecedeb;"></div>
<div style="position:absolute;left:1392px;top:339.5px;width:1722px;height:1.5px;background:#d4d4d4;"></div>
<div class="t" style="left:753.0px;width:3000px;text-align:center;top:297px;font-size:27.2px;color:#3b3b3b;font-weight:bold;font-family:'Liberation Sans', sans-serif;">DevTools - fonts.google.com/</div>
<div style="position:absolute;left:1408px;top:300px;width:24px;height:24px;box-sizing:border-box;border-radius:50%;background:#ff5f57;border:0.8px solid #e2463f"></div>
<div style="position:absolute;left:1448px;top:300px;width:24px;height:24px;box-sizing:border-box;border-radius:50%;background:#febc2e;border:0.8px solid #e1a116"></div>
<div style="position:absolute;left:1488px;top:300px;width:24px;height:24px;box-sizing:border-box;border-radius:50%;background:#28c840;border:0.8px solid #14ae2b"></div>
<div style="position:absolute;left:1392px;top:341px;width:1722px;height:65px;background:#edf2fa;"></div>
<div style="position:absolute;left:1392px;top:406px;width:1722px;height:2px;background:#d3e3fd;"></div>
<div style="position:absolute;left:1392px;top:408px;width:1722px;height:64px;background:#fff;"></div>
<svg style="position:absolute;left:1414px;top:355px;" width="36" height="36" viewBox="0 0 36 36"><g fill="#474747"><rect x="8" y="0.6" width="3.6" height="3.4"/><rect x="16" y="0.6" width="3.6" height="3.4"/><rect x="24" y="0.6" width="3.6" height="3.4"/><rect x="0.6" y="8.4" width="3.6" height="3.6"/><rect x="0.6" y="16.3" width="3.6" height="3.6"/><rect x="0.6" y="24" width="3.6" height="3.6"/><rect x="32.1" y="8.4" width="3.6" height="3.6"/><rect x="8" y="32.1" width="3.6" height="3.6"/><path d="M0.6 4 A3.4 3.4 0 0 1 4 0.6 V4 Z"/><path d="M32.1 0.6 A3.6 3.6 0 0 1 35.7 4 H32.1 Z"/><path d="M0.6 32.1 H4 V35.7 A3.4 3.4 0 0 1 0.6 32.1 Z"/><path d="M15.4 15.8 H35.7 V19.2 H18.9 V35.3 H15.4 Z"/></g><path d="M17.5 17.8 L34.2 34" stroke="#474747" stroke-width="3.6"/></svg>
<svg style="position:absolute;left:1482px;top:355px;" width="42" height="34" viewBox="0 0 42 34"><g fill="#474747"><path d="M5.2 6.5 A3.5 3.5 0 0 1 8.7 3 H37.6 V6.6 H8.8 V31 H5.2 Z"/><rect x="0" y="28.1" width="20" height="4.8"/></g><rect x="27" y="12" width="11" height="19" rx="2.5" fill="none" stroke="#474747" stroke-width="3.6"/></svg>
<div style="position:absolute;left:1547.3px;top:353px;width:2.5px;height:39px;background:#d3e3fd;"></div>
<div class="t" style="left:1595px;top:359px;font-size:30.8px;color:#474747;font-weight:normal;font-family:'Liberation Sans', sans-serif;">Elements</div>
<div class="t" style="left:1784.6px;top:359px;font-size:30.8px;color:#474747;font-weight:normal;font-family:'Liberation Sans', sans-serif;">Console</div>
<div class="t" style="left:1960px;top:359px;font-size:30.8px;color:#474747;font-weight:normal;font-family:'Liberation Sans', sans-serif;">Sources</div>
<div class="t" style="left:2134.5px;top:359px;font-size:30.8px;color:#474747;font-weight:normal;font-family:'Liberation Sans', sans-serif;">Network</div>
<div class="t" style="left:2552px;top:359px;font-size:30.8px;color:#474747;font-weight:normal;font-family:'Liberation Sans', sans-serif;">Memory</div>
<div class="t" style="left:2312px;top:358px;font-size:31.2px;color:#0b57d0;font-weight:normal;font-family:'Liberation Sans', sans-serif;">Performance</div>
<div style="position:absolute;left:2282px;top:402.5px;width:240.4px;height:4px;background:#0b57d0;"></div>
<svg style="position:absolute;left:2708px;top:360px;" width="30" height="26" viewBox="0 0 30 26"><g fill="none" stroke="#5f6368" stroke-width="3.4"><path d="M2 2 L13 13 L2 24"/><path d="M15 2 L26 13 L15 24"/></g></svg>
<svg style="position:absolute;left:2793.5px;top:360px;" width="31" height="28" viewBox="0 0 31 28"><path d="M15.5 1 L31 27 H0 Z" fill="#e8710a"/><rect x="14" y="9" width="3.2" height="10" fill="#fff"/><rect x="14" y="21" width="3.2" height="3.2" fill="#fff"/></svg>
<div class="t" style="left:2834px;top:360px;font-size:30.6px;color:#474747;font-weight:normal;font-family:'Liberation Sans', sans-serif;">1</div>
<svg style="position:absolute;left:2878.6px;top:362.5px;" width="26" height="26" viewBox="0 0 26 26"><path d="M3 0 H22 A3 3 0 0 1 25 3 V17 A3 3 0 0 1 22 20 H6 L1 25 V3 A3 3 0 0 1 3 0 Z" fill="#0b57d0"/><rect x="6" y="5" width="13" height="2.6" fill="#fff"/><rect x="6" y="9.5" width="13" height="2.6" fill="#fff"/><rect x="6" y="14" width="9" height="2.6" fill="#fff"/></svg>
<div class="t" style="left:2915px;top:360px;font-size:30.6px;color:#474747;font-weight:normal;font-family:'Liberation Sans', sans-serif;">1</div>
<div style="position:absolute;left:2957px;top:353px;width:2.5px;height:39px;background:#d3e3fd;"></div>
<svg style="position:absolute;left:2984px;top:353px;" width="40" height="40" viewBox="0 0 40 40"><polygon points="14.28,8.77 16.32,3.40 23.68,3.40 25.72,8.77 26.86,9.43 32.53,8.51 36.21,14.89 32.58,19.34 32.58,20.66 36.21,25.11 32.53,31.49 26.86,30.57 25.72,31.23 23.68,36.60 16.32,36.60 14.28,31.23 13.14,30.57 7.47,31.49 3.79,25.11 7.42,20.66 7.42,19.34 3.79,14.89 7.47,8.51 13.14,9.43" fill="none" stroke="#474747" stroke-width="3.5" stroke-linejoin="round"/><circle cx="20" cy="20" r="6.1" fill="#474747"/></svg>
<svg style="position:absolute;left:3067.4px;top:356px;" width="12" height="34" viewBox="0 0 12 34"><circle cx="6" cy="5" r="3.8" fill="#474747"/><circle cx="6" cy="17" r="3.8" fill="#474747"/><circle cx="6" cy="29" r="3.8" fill="#474747"/></svg>
<svg style="position:absolute;left:1414px;top:422px;" width="36" height="36" viewBox="0 0 36 36"><rect x="2.5" y="2.5" width="31" height="31" rx="2" fill="none" stroke="#474747" stroke-width="3.4"/><path d="M11 3 V33" stroke="#474747" stroke-width="3.4"/><path d="M17 11 L25 18 L17 25 Z" fill="#474747"/></svg>
<svg style="position:absolute;left:1482px;top:420px;" width="40" height="40" viewBox="0 0 40 40"><circle cx="20" cy="20" r="16.9" fill="none" stroke="#474747" stroke-width="3.3"/><circle cx="20" cy="20" r="10.2" fill="#474747"/></svg>
<svg style="position:absolute;left:1552px;top:420px;" width="40" height="40" viewBox="0 0 40 40"><path d="M35.8 20.5 A15.8 15.8 0 1 1 32.2 10.2" fill="none" stroke="#474747" stroke-width="3.3"/><path d="M34.5 2.2 H38.1 V15.1 H25.2 V11.1 H34.5 Z" fill="#474747"/></svg>
<svg style="position:absolute;left:1622px;top:420px;" width="40" height="40" viewBox="0 0 40 40"><circle cx="20" cy="20" r="16.9" fill="none" stroke="#474747" stroke-width="3.3"/><path d="M8.8 31.2 L30.7 8.8" stroke="#474747" stroke-width="3.3"/></svg>
<div style="position:absolute;left:1687.5px;top:421px;width:2.5px;height:38px;background:#d3e3fd;"></div>
<svg style="position:absolute;left:1717px;top:422px;" width="36" height="36" viewBox="0 0 36 36"><g fill="none" stroke="#474747" stroke-width="3.6"><path d="M18 25 V4.5"/><path d="M9.5 12.5 L18 4 L26.5 12.5"/><path d="M4.3 24 V28 A3 3 0 0 0 7.3 31 H28.7 A3 3 0 0 0 31.7 28 V24"/></g></svg>
<svg style="position:absolute;left:1787px;top:422px;" width="36" height="36" viewBox="0 0 36 36"><g fill="none" stroke="#474747" stroke-width="3.6"><path d="M18 3 V23.5"/><path d="M9.5 15.5 L18 24 L26.5 15.5"/><path d="M4.3 24 V28 A3 3 0 0 0 7.3 31 H28.7 A3 3 0 0 0 31.7 28 V24"/></g></svg>
<div style="position:absolute;left:1850px;top:421px;width:2.5px;height:38px;background:#d3e3fd;"></div>
<svg style="position:absolute;left:1878px;top:420px;" width="38" height="40" viewBox="0 0 38 40"><path d="M3.5 36.5 V14.5 L19 2.5 L34.5 14.5 V36.5 H24 V25.5 H14 V36.5 Z" fill="none" stroke="#474747" stroke-width="3.6" stroke-linejoin="miter"/></svg>
<div style="position:absolute;left:1942.3px;top:421px;width:2.5px;height:38px;background:#d3e3fd;"></div>
<div class="t" style="left:1970px;top:426px;font-size:31.5px;color:#1f1f1f;font-weight:normal;font-family:'Liberation Sans', sans-serif;">fonts.google.com #1</div>
<svg style="position:absolute;left:2332px;top:433px;" width="20" height="14" viewBox="0 0 20 14"><path d="M0 0 H20 L10 14 Z" fill="#474747"/></svg>
<div style="position:absolute;left:2364.4px;top:421px;width:2.5px;height:38px;background:#d3e3fd;"></div>
<div style="position:absolute;left:2392.6px;top:425.6px;width:24px;height:24px;border:3px solid #6f6f6f;border-radius:5px;background:#fff"></div>
<div class="t" style="left:2438px;top:426px;font-size:31.3px;color:#474747;font-weight:normal;font-family:'Liberation Sans', sans-serif;">Screenshots</div>
<div style="position:absolute;left:2641.5px;top:425.6px;width:24px;height:24px;border:3px solid #6f6f6f;border-radius:5px;background:#fff"></div>
<div class="t" style="left:2687px;top:426px;font-size:31.3px;color:#474747;font-weight:normal;font-family:'Liberation Sans', sans-serif;">Memory</div>
<svg style="position:absolute;left:2828px;top:422px;" width="36" height="36" viewBox="0 0 36 36"><g fill="none" stroke="#474747" stroke-width="3.2"><path d="M14.5 14 V5 A3.5 3.5 0 0 1 21.5 5 V14"/><path d="M6 15 H30 L33 32 H3 Z"/><path d="M3.5 23 H32.5"/><path d="M11 26 V32"/><path d="M18 26 V32"/><path d="M25 26 V32"/></g></svg>
<div style="position:absolute;left:3022px;top:421px;width:2.5px;height:38px;background:#d3e3fd;"></div>
<svg style="position:absolute;left:3047px;top:421px;" width="40" height="40" viewBox="0 0 40 40"><polygon points="14.28,8.77 16.32,3.40 23.68,3.40 25.72,8.77 26.86,9.43 32.53,8.51 36.21,14.89 32.58,19.34 32.58,20.66 36.21,25.11 32.53,31.49 26.86,30.57 25.72,31.23 23.68,36.60 16.32,36.60 14.28,31.23 13.14,30.57 7.47,31.49 3.79,25.11 7.42,20.66 7.42,19.34 3.79,14.89 7.47,8.51 13.14,9.43" fill="none" stroke="#474747" stroke-width="3.5" stroke-linejoin="round"/><circle cx="20" cy="20" r="6.1" fill="#474747"/></svg>
<svg style="position:absolute;left:0;top:0" width="3230" height="2115"><rect x="1392" y="473" width="1722" height="126" fill="#fff"/><rect x="1392" y="473" width="1722" height="1.5" fill="#d3e3fd"/><polygon points="1400,572.5 1400,572 1407,572 1413.3,539 1419,572 1433,560 1441.7,525 1441.7,552 1453.7,524.3 1531.3,524.3 1538,572 1550,572 1557,549.2 1574,572 1577.8,560 1588,524 1957,524 1964.6,540 1975,548 1982,526 2005,526 2024,545 2030,572 2040,553.5 2058,572 2232,572 2240,545 2247,525.5 2255,572 3114,572 3114,572.5" fill="#c6c6c6" /><polygon points="1440.8,572.5 1440.8,572 1464,530.3 1478,537 1489,554.4 1514,530.3 1528,537 1536,555 1538,572 1576,572 1588,525 1640,526 1652,530 1660,526 1957,524.6 1964.6,545 1975,551.7 1990,540 1997,533.7 2010,548 2024,551.7 2030,572 2040,560 2058,572 2100,570 2240,566 2247,538.7 2255,570 2300,568 2400,570 2436.7,568 2450,561.4 2470.7,570 2600,571.3 3114,571.3 3114,572.5" fill="#f8ca18" /><polygon points="1602,572.5 1602,572 1607,556 1635,556 1640.6,572 1648,556 1953.8,555.3 1968,572 1968,572.5" fill="#7cabf5" /><polygon points="1486.5,572.5 1486.5,572 1489.95,564.7 1493.4,572 1493.4,572.5" fill="#d7a3f7" /><polygon points="1510.6,572.5 1510.6,572 1523.5,557.9 1536.4,572 1536.4,572.5" fill="#d7a3f7" /><polygon points="1576,572.5 1576,572 1589.0,565.6 1602,572 1602,572.5" fill="#d7a3f7" /><polygon points="1968,572.5 1968,572 1996.0,556 2024,572 2024,572.5" fill="#d7a3f7" /><polygon points="2030,572.5 2030,572 2044.0,562 2058,572 2058,572.5" fill="#d7a3f7" /><polygon points="2240,572.5 2240,572 2250.0,555.8 2260,572 2260,572.5" fill="#d7a3f7" /><polygon points="1485,572.5 1485,572 1492.5,568 1500,572 1500,572.5" fill="#5bb974" /><polygon points="1525,572.5 1525,572 1535.0,568 1545,572 1545,572.5" fill="#5bb974" /><polygon points="1560,572.5 1560,572 1570.0,568 1580,572 1580,572.5" fill="#5bb974" /><polygon points="1990,572.5 1990,572 2007.0,568 2024,572 2024,572.5" fill="#5bb974" /><rect x="2025.5" y="474.5" width="1090" height="124" fill="rgb(91,147,239)" fill-opacity="0.25"/><rect x="1456" y="505.3" width="37.40000000000009" height="12.1" fill="#f6cfcf"/><rect x="1488" y="505.3" width="5.400000000000091" height="12.1" fill="#ee1111"/><rect x="1502.8" y="505.3" width="25.90000000000009" height="12.1" fill="#f6cfcf"/><rect x="1523" y="505.3" width="5.7000000000000455" height="12.1" fill="#ee1111"/><rect x="1580" y="505.3" width="390" height="12.1" fill="#f6cfcf"/><rect x="1964.5" y="505.3" width="5.5" height="12.1" fill="#ee1111"/><rect x="1397" y="578" width="59.799999999999955" height="8.6" fill="#5f95db"/><rect x="1474" y="578" width="545" height="8.6" fill="#5f95db"/><rect x="2021" y="578" width="4" height="8.6" fill="#5f95db"/><rect x="1412" y="588.3" width="86.5" height="8.3" fill="#a1c2f3"/><rect x="1699.8" y="474.5" width="2" height="124" fill="#b7cff7"/><rect x="2008.8" y="474.5" width="2" height="124" fill="#b7cff7"/><rect x="2319.5" y="474.5" width="2" height="124" fill="#b7cff7"/><rect x="2629" y="474.5" width="2" height="124" fill="#b7cff7"/><rect x="2939" y="474.5" width="2" height="124" fill="#b7cff7"/><rect x="2175" y="474.5" width="2.2" height="124" fill="#2f4d57"/><rect x="1495" y="474.5" width="2.2" height="124" fill="#1a73e8"/><rect x="1504.7" y="474.5" width="2.2" height="124" fill="#137333"/><rect x="1564.6" y="474.5" width="2.2" height="124" fill="#b31412"/><rect x="3022" y="578.5" width="11" height="8.3" fill="#5f95db"/><rect x="2960" y="596" width="123" height="1.5" fill="#b0c4e8"/></svg>
<div class="t" style="right:1536.4px;top:479px;font-size:26px;color:#3f4a58;font-weight:normal;font-family:'Liberation Sans', sans-serif;">995 ms</div>
<div class="t" style="right:1226.7px;top:479px;font-size:26px;color:#3f4a58;font-weight:normal;font-family:'Liberation Sans', sans-serif;">1995 ms</div>
<div class="t" style="right:917px;top:479px;font-size:26px;color:#3f4a58;font-weight:normal;font-family:'Liberation Sans', sans-serif;">2995 ms</div>
<div class="t" style="right:607px;top:479px;font-size:26px;color:#3f4a58;font-weight:normal;font-family:'Liberation Sans', sans-serif;">3995 ms</div>
<div class="t" style="right:297px;top:479px;font-size:26px;color:#3f4a58;font-weight:normal;font-family:'Liberation Sans', sans-serif;">4995 ms</div>
<div class="t" style="left:3049px;top:522px;font-size:25px;color:#9aa6b8;font-weight:bold;font-family:'Liberation Sans', sans-serif;">CPU</div>
<div class="t" style="left:3053px;top:576px;font-size:25px;color:#9aa6b8;font-weight:bold;font-family:'Liberation Sans', sans-serif;">NET</div>
<svg style="position:absolute;left:0;top:0" width="3230" height="2115"><rect x="1392" y="521" width="8.5" height="77.5" fill="#a8c7fa"/><rect x="1381" y="476.6" width="21.5" height="44.5" rx="6" fill="#d3e3fd" stroke="#a8c7fa" stroke-width="2.2"/><rect x="1387" y="490" width="2.8" height="16" fill="#0b57d0"/><rect x="1393.5" y="490" width="2.8" height="16" fill="#0b57d0"/><rect x="2021" y="521" width="8.5" height="77.5" fill="#a8c7fa"/><rect x="2015.5" y="476.6" width="21.5" height="44.5" rx="6" fill="#d3e3fd" stroke="#a8c7fa" stroke-width="2.2"/><rect x="2021.5" y="490" width="2.8" height="16" fill="#0b57d0"/><rect x="2028.0" y="490" width="2.8" height="16" fill="#0b57d0"/><rect x="1392" y="598" width="1722" height="2" fill="#d3e3fd"/><rect x="1392" y="600" width="1722" height="46" fill="#fff"/><rect x="1557.25" y="600" width="1.5" height="177" fill="#e3ebf8"/><rect x="1722.25" y="600" width="1.5" height="177" fill="#e3ebf8"/><rect x="1887.95" y="600" width="1.5" height="177" fill="#e3ebf8"/><rect x="2055.25" y="600" width="1.5" height="177" fill="#e3ebf8"/><rect x="2220.25" y="600" width="1.5" height="177" fill="#e3ebf8"/><rect x="2384.85" y="600" width="1.5" height="177" fill="#e3ebf8"/><rect x="2552.25" y="600" width="1.5" height="177" fill="#e3ebf8"/><rect x="2717.65" y="600" width="1.5" height="177" fill="#e3ebf8"/><rect x="2882.25" y="600" width="1.5" height="177" fill="#e3ebf8"/><rect x="3046.75" y="600" width="1.5" height="177" fill="#e3ebf8"/><rect x="3089" y="608.7" width="20" height="23.3" rx="10" fill="#c4c4c4"/></svg>
<div class="t" style="left:1453px;top:605px;font-size:28.2px;color:#1f1f1f;font-weight:normal;font-family:'Liberation Sans', sans-serif;">195 ms</div>
<div class="t" style="left:1614.8px;top:605px;font-size:28.2px;color:#1f1f1f;font-weight:normal;font-family:'Liberation Sans', sans-serif;">395 ms</div>
<div class="t" style="left:1779.6px;top:605px;font-size:28.2px;color:#1f1f1f;font-weight:normal;font-family:'Liberation Sans', sans-serif;">595 ms</div>
<div class="t" style="left:1948.4px;top:605px;font-size:28.2px;color:#1f1f1f;font-weight:normal;font-family:'Liberation Sans', sans-serif;">795 ms</div>
<div class="t" style="left:2111px;top:605px;font-size:28.2px;color:#1f1f1f;font-weight:normal;font-family:'Liberation Sans', sans-serif;">995 ms</div>
<div class="t" style="left:2268px;top:605px;font-size:28.2px;color:#1f1f1f;font-weight:normal;font-family:'Liberation Sans', sans-serif;">1195 ms</div>
<div class="t" style="left:2431px;top:605px;font-size:28.2px;color:#1f1f1f;font-weight:normal;font-family:'Liberation Sans', sans-serif;">1395 ms</div>
<div class="t" style="left:2595.5px;top:605px;font-size:28.2px;color:#1f1f1f;font-weight:normal;font-family:'Liberation Sans', sans-serif;">1595 ms</div>
<div class="t" style="left:2762px;top:605px;font-size:28.2px;color:#1f1f1f;font-weight:normal;font-family:'Liberation Sans', sans-serif;">1795 ms</div>
<div class="t" style="left:2925px;top:605px;font-size:28.2px;color:#1f1f1f;font-weight:normal;font-family:'Liberation Sans', sans-serif;">1995 ms</div>
<svg style="position:absolute;left:0;top:0" width="3230" height="2115"><rect x="1392" y="646" width="1722" height="14.5" fill="#f1f4fa"/><circle cx="2243.5" cy="651.5" r="3.3" fill="#1f1f1f"/><circle cx="2252.5" cy="651.5" r="3.3" fill="#1f1f1f"/><circle cx="2261.5" cy="651.5" r="3.3" fill="#1f1f1f"/><rect x="1392" y="660" width="1722" height="118" fill="#fff"/><rect x="1397" y="662" width="1690" height="46" fill="#f3f6fc"/><rect x="1557.25" y="662" width="1.5" height="114" fill="#e3ebf8"/><rect x="1722.25" y="662" width="1.5" height="114" fill="#e3ebf8"/><rect x="1887.95" y="662" width="1.5" height="114" fill="#e3ebf8"/><rect x="2055.25" y="662" width="1.5" height="114" fill="#e3ebf8"/><rect x="2220.25" y="662" width="1.5" height="114" fill="#e3ebf8"/><rect x="2384.85" y="662" width="1.5" height="114" fill="#e3ebf8"/><rect x="2552.25" y="662" width="1.5" height="114" fill="#e3ebf8"/><rect x="2717.65" y="662" width="1.5" height="114" fill="#e3ebf8"/><rect x="2882.25" y="662" width="1.5" height="114" fill="#e3ebf8"/><rect x="3046.75" y="662" width="1.5" height="114" fill="#e3ebf8"/><rect x="1517.5" y="717" width="138" height="41.3" fill="#d6efcd"/><rect x="1525" y="722" width="52" height="36" fill="#eef8ea"/><rect x="1658" y="717" width="13" height="41.3" fill="#d6efcd"/><rect x="1673.2" y="717" width="13" height="41.3" fill="#d6efcd"/><rect x="1688.4" y="717" width="13" height="41.3" fill="#d6efcd"/><rect x="1703.6000000000001" y="717" width="13" height="41.3" fill="#efe143"/><rect x="1718.8000000000002" y="717" width="13" height="41.3" fill="#efe143"/><rect x="1734.0000000000002" y="717" width="13" height="41.3" fill="#efe143"/><rect x="1749.2000000000003" y="717" width="13" height="41.3" fill="#efe143"/><rect x="1764.4000000000003" y="717" width="13" height="41.3" fill="#d6efcd"/><rect x="1779.6000000000004" y="717" width="13" height="41.3" fill="#d6efcd"/><rect x="1794.8000000000004" y="717" width="13" height="41.3" fill="#d6efcd"/><rect x="1810.0000000000005" y="717" width="13" height="41.3" fill="#d6efcd"/><rect x="1825.2000000000005" y="717" width="13" height="41.3" fill="#d6efcd"/><rect x="1840.4000000000005" y="717" width="13" height="41.3" fill="#d6efcd"/><rect x="1855.6000000000006" y="717" width="13" height="41.3" fill="#d6efcd"/><rect x="1870.8000000000006" y="717" width="13" height="41.3" fill="#d6efcd"/><rect x="1886.0000000000007" y="717" width="13" height="41.3" fill="#d6efcd"/><rect x="1901.2000000000007" y="717" width="13" height="41.3" fill="#d6efcd"/><rect x="1916.4000000000008" y="717" width="13" height="41.3" fill="#d6efcd"/><rect x="1931.6000000000008" y="717" width="13" height="41.3" fill="#efe143"/><rect x="1946.8000000000009" y="717" width="13" height="41.3" fill="#efe143"/><rect x="1962.000000000001" y="717" width="13" height="41.3" fill="#efe143"/><rect x="1977.200000000001" y="717" width="13" height="41.3" fill="#efe143"/><rect x="1992.400000000001" y="717" width="13" height="41.3" fill="#efe143"/><rect x="2007.600000000001" y="717" width="13" height="41.3" fill="#efe143"/><rect x="2022.800000000001" y="717" width="13" height="41.3" fill="#efe143"/><rect x="2038.0000000000011" y="717" width="13" height="41.3" fill="#efe143"/><rect x="2053.200000000001" y="717" width="13" height="41.3" fill="#efe143"/><rect x="2068.400000000001" y="717" width="13" height="41.3" fill="#efe143"/><rect x="2083.600000000001" y="717" width="13" height="41.3" fill="#efe143"/><rect x="2098.8000000000006" y="717" width="13" height="41.3" fill="#efe143"/><rect x="2114.0000000000005" y="717" width="13" height="41.3" fill="#efe143"/><rect x="2129.2000000000003" y="717" width="13" height="41.3" fill="#efe143"/><rect x="2144.4" y="717" width="13" height="41.3" fill="#efe143"/><rect x="2159.6" y="717" width="13" height="41.3" fill="#efe143"/><rect x="2174.7999999999997" y="717" width="13" height="41.3" fill="#efe143"/><rect x="2189.9999999999995" y="717" width="13" height="41.3" fill="#efe143"/><rect x="2205.1999999999994" y="717" width="13" height="41.3" fill="#efe143"/><rect x="2220.399999999999" y="717" width="13" height="41.3" fill="#efe143"/><rect x="2235.599999999999" y="717" width="13" height="41.3" fill="#efe143"/><rect x="2250.799999999999" y="717" width="13" height="41.3" fill="#efe143"/><rect x="2265.9999999999986" y="717" width="13" height="41.3" fill="#efe143"/><rect x="2281.1999999999985" y="717" width="13" height="41.3" fill="#efe143"/><rect x="2296.3999999999983" y="717" width="13" height="41.3" fill="#efe143"/><rect x="2311.599999999998" y="717" width="13" height="41.3" fill="#efe143"/><rect x="2326.799999999998" y="717" width="13" height="41.3" fill="#efe143"/><rect x="2341.9999999999977" y="717" width="13" height="41.3" fill="#efe143"/><rect x="2357.1999999999975" y="717" width="13" height="41.3" fill="#efe143"/><rect x="2372.3999999999974" y="717" width="13" height="41.3" fill="#efe143"/><rect x="2387.599999999997" y="717" width="13" height="41.3" fill="#efe143"/><rect x="2402.799999999997" y="717" width="13" height="41.3" fill="#efe143"/><rect x="2417.999999999997" y="717" width="13" height="41.3" fill="#efe143"/><rect x="2433.1999999999966" y="717" width="13" height="41.3" fill="#efe143"/><rect x="2448.3999999999965" y="717" width="13" height="41.3" fill="#efe143"/><rect x="2463.5999999999963" y="717" width="13" height="41.3" fill="#efe143"/><rect x="2478.799999999996" y="717" width="13" height="41.3" fill="#efe143"/><rect x="2493.999999999996" y="717" width="13" height="41.3" fill="#efe143"/><rect x="2509.1999999999957" y="717" width="13" height="41.3" fill="#efe143"/><rect x="2524.3999999999955" y="717" width="13" height="41.3" fill="#efe143"/><rect x="2539.5999999999954" y="717" width="13" height="41.3" fill="#efe143"/><rect x="2554.799999999995" y="717" width="13" height="41.3" fill="#efe143"/><rect x="2569.999999999995" y="717" width="13" height="41.3" fill="#efe143"/><rect x="2585.199999999995" y="717" width="13" height="41.3" fill="#efe143"/><rect x="2600.3999999999946" y="717" width="13" height="41.3" fill="#efe143"/><rect x="2615.5999999999945" y="717" width="13" height="41.3" fill="#efe143"/><rect x="2630.7999999999943" y="717" width="13" height="41.3" fill="#efe143"/><rect x="2645.999999999994" y="717" width="13" height="41.3" fill="#efe143"/><rect x="2661.199999999994" y="717" width="13" height="41.3" fill="#efe143"/><rect x="2676.3999999999937" y="717" width="13" height="41.3" fill="#efe143"/><rect x="2691.5999999999935" y="717" width="13" height="41.3" fill="#efe143"/><rect x="2706.7999999999934" y="717" width="13" height="41.3" fill="#efe143"/><rect x="2721.999999999993" y="717" width="13" height="41.3" fill="#efe143"/><rect x="2737.199999999993" y="717" width="13" height="41.3" fill="#efe143"/><rect x="2752.399999999993" y="717" width="13" height="41.3" fill="#efe143"/><rect x="2767.5999999999926" y="717" width="13" height="41.3" fill="#efe143"/><rect x="2782.7999999999925" y="717" width="13" height="41.3" fill="#efe143"/><rect x="2797.9999999999923" y="717" width="13" height="41.3" fill="#efe143"/><rect x="2813.199999999992" y="717" width="13" height="41.3" fill="#efe143"/><rect x="2828.399999999992" y="717" width="13" height="41.3" fill="#efe143"/><rect x="2843.5999999999917" y="717" width="13" height="41.3" fill="#efe143"/><rect x="2858.7999999999915" y="717" width="13" height="41.3" fill="#efe143"/><rect x="2873.9999999999914" y="717" width="13" height="41.3" fill="#efe143"/><rect x="2889.199999999991" y="717" width="13" height="41.3" fill="#efe143"/><rect x="2904.399999999991" y="717" width="13" height="41.3" fill="#efe143"/><rect x="2919.599999999991" y="717" width="13" height="41.3" fill="#efe143"/><rect x="2934.7999999999906" y="717" width="13" height="41.3" fill="#d6efcd"/><rect x="2949.9999999999905" y="717" width="13" height="41.3" fill="#efe143"/><rect x="2965.1999999999903" y="717" width="13" height="41.3" fill="#d6efcd"/><rect x="2980.39999999999" y="717" width="13" height="41.3" fill="#d6efcd"/><rect x="2995.59999999999" y="717" width="13" height="41.3" fill="#d6efcd"/><rect x="3010.7999999999897" y="717" width="13" height="41.3" fill="#d6efcd"/><rect x="3025.9999999999895" y="717" width="13" height="41.3" fill="#d6efcd"/><rect x="3041.1999999999894" y="717" width="13" height="41.3" fill="#d6efcd"/><rect x="3056.399999999989" y="717" width="13" height="41.3" fill="#d6efcd"/><rect x="3071.599999999989" y="717" width="13" height="41.3" fill="#d6efcd"/><rect x="3086.799999999989" y="717" width="13" height="41.3" fill="#d6efcd"/><rect x="1392" y="761" width="1695" height="1.5" fill="#e6e6e6"/><rect x="1707" y="768" width="1242.7" height="7.4" fill="#c58af9"/><line x1="1443" y1="662" x2="1443" y2="777" stroke="#f29900" stroke-width="2" stroke-dasharray="10 6"/><line x1="1668" y1="662" x2="1668" y2="777" stroke="#1a73e8" stroke-width="2" stroke-dasharray="10 6"/><line x1="1690.6" y1="662" x2="1690.6" y2="777" stroke="#137333" stroke-width="2" stroke-dasharray="10 6"/><line x1="1853" y1="662" x2="1853" y2="777" stroke="#c5221f" stroke-width="2" stroke-dasharray="10 6"/><path d="M1757 673 L1770 687 L1757 701 L1744 687 Z" fill="#d18cf8"/><path d="M1773 673 L1786 687 L1773 701 L1760 687 Z" fill="#d18cf8"/><path d="M1788 673 L1801 687 L1788 701 L1775 687 Z" fill="#d18cf8"/><path d="M1795 673 L1801 679 L1795 685 L1789 679 Z" fill="#d18cf8" fill-opacity="0.5"/><path d="M1808 673 L1814 679 L1808 685 L1802 679 Z" fill="#d18cf8" fill-opacity="0.5"/><path d="M1822 673 L1828 679 L1822 685 L1816 679 Z" fill="#d18cf8" fill-opacity="0.5"/><path d="M1835 673 L1841 679 L1835 685 L1829 679 Z" fill="#d18cf8" fill-opacity="0.5"/><path d="M1848 673 L1854 679 L1848 685 L1842 679 Z" fill="#d18cf8" fill-opacity="0.5"/><rect x="1790" y="684.5" width="930" height="5.2" fill="#c9a8f8"/><rect x="1759.6" y="667.4" width="958" height="38" fill="rgba(11,87,208,0.18)" stroke="#0b57d0" stroke-width="4.3"/><rect x="2957" y="685.5" width="130" height="3.5" fill="#ead2fc"/><path d="M2931.5 667 L2951.5 687.3 L2931.5 707.6 L2911.5 687.3 Z" fill="#d18cf8"/><path d="M2957.7 679 L2965.7 687.3 L2957.7 695.6 L2949.7 687.3 Z" fill="#d18cf8"/><rect x="3089.6" y="668" width="19" height="29.8" rx="9.5" fill="#c4c4c4"/><rect x="1392" y="659.8" width="1695" height="2.2" fill="#0b57d0"/><rect x="1392" y="775.8" width="1695" height="2.2" fill="#0b57d0"/><rect x="1392.6" y="660" width="4.4" height="117" fill="#e3207a"/><rect x="1397" y="661.4" width="20" height="5.4" fill="#3c7be3"/><rect x="1397" y="707.5" width="20" height="5" fill="#3c7be3"/></svg>
<div class="t" style="left:1435.6px;top:671px;font-size:29.5px;color:#1f1f1f;font-weight:normal;font-family:'Liberation Sans', sans-serif;">Layout shifts</div>
<div class="t" style="left:1435.6px;top:723px;font-size:27.5px;color:#1f1f1f;font-weight:normal;font-family:'Liberation Sans', sans-serif;">Frames</div>
<div class="t" style="left:1535.7px;top:724px;font-size:25.5px;color:#3b3b3b;font-weight:normal;font-family:'Liberation Sans', sans-serif;">167.1 ms</div>
<div style="position:absolute;left:1781.5px;top:680.6px;width:331px;height:56px;background:#fff;box-shadow:0 2px 6px rgba(0,0,0,0.3)"></div>
<div class="t" style="left:1802.4px;top:691px;font-size:32.2px;color:#137333;font-weight:normal;font-family:'Liberation Sans', sans-serif;">0.0269</div>
<div class="t" style="left:1915.8px;top:692px;font-size:31.6px;color:#1f1f1f;font-weight:normal;font-family:'Liberation Sans', sans-serif;">Layout shift</div>
<div style="position:absolute;left:1392px;top:778px;width:1722px;height:68.5px;background:#edf2fa;"></div>
<div style="position:absolute;left:1392px;top:845.8px;width:1722px;height:2px;background:#d3e3fd;"></div>
<div class="t" style="left:1417px;top:798px;font-size:30.8px;color:#0b57d0;font-weight:normal;font-family:'Liberation Sans', sans-serif;">Summary</div>
<div class="t" style="left:1599.5px;top:796px;font-size:32.7px;color:#474747;font-weight:normal;font-family:'Liberation Sans', sans-serif;">Bottom-up</div>
<div class="t" style="left:1801.7px;top:798px;font-size:31.2px;color:#474747;font-weight:normal;font-family:'Liberation Sans', sans-serif;">Call tree</div>
<div class="t" style="left:1969px;top:798px;font-size:30.8px;color:#474747;font-weight:normal;font-family:'Liberation Sans', sans-serif;">Event log</div>
<div style="position:absolute;left:1392px;top:842.6px;width:182.7px;height:4.5px;background:#0b57d0;"></div>
<div style="position:absolute;left:1422.5px;top:881.6px;width:28.5px;height:28.5px;background:#d18cf8;border:2px solid #d3e3fd"></div>
<div class="t" style="left:1467px;top:882px;font-size:32.3px;color:#1f1f1f;font-weight:normal;font-family:'Liberation Sans', sans-serif;">Layout shift cluster</div>
<div style="position:absolute;left:1422px;top:937.7px;width:1594.3000000000002px;height:2px;background:#d3e3fd;"></div>
<div style="position:absolute;left:1422px;top:984.6px;width:1594.3000000000002px;height:2px;background:#d3e3fd;"></div>
<div style="position:absolute;left:1422px;top:1111.9px;width:1594.3000000000002px;height:2px;background:#d3e3fd;"></div>
<div style="position:absolute;left:1422px;top:1438.6px;width:1594.3000000000002px;height:2px;background:#d3e3fd;"></div>
<div style="position:absolute;left:1422px;top:1485.5px;width:1594.3000000000002px;height:2px;background:#d3e3fd;"></div>
<div style="position:absolute;left:1422px;top:1532.5px;width:1594.3000000000002px;height:2px;background:#d3e3fd;"></div>
<div style="position:absolute;left:1422px;top:1579.5px;width:1594.3000000000002px;height:2px;background:#d3e3fd;"></div>
<div style="position:absolute;left:1422px;top:1626.5px;width:1594.3000000000002px;height:2px;background:#d3e3fd;"></div>
<div style="position:absolute;left:1422px;top:1673.4px;width:1594.3000000000002px;height:2px;background:#d3e3fd;"></div>
<div style="position:absolute;left:1422px;top:1720.4px;width:1594.3000000000002px;height:2px;background:#d3e3fd;"></div>
<div style="position:absolute;left:1422px;top:1807.7px;width:1594.3000000000002px;height:2px;background:#d3e3fd;"></div>
<div style="position:absolute;left:1422px;top:1854.7px;width:1594.3000000000002px;height:2px;background:#d3e3fd;"></div>
<div style="position:absolute;left:1422px;top:1901.6px;width:1594.3000000000002px;height:2px;background:#d3e3fd;"></div>
<div style="position:absolute;left:1422px;top:1948.6px;width:1594.3000000000002px;height:2px;background:#d3e3fd;"></div>
<div class="t" style="left:1425.4px;top:947px;font-size:31.5px;color:#1f1f1f;font-weight:normal;font-family:'Liberation Sans', sans-serif;-webkit-text-stroke:0.6px #1f1f1f;letter-spacing:0.6px">Start time</div>
<div class="t" style="left:1806px;top:947px;font-size:31.5px;color:#1f1f1f;font-weight:normal;font-family:'Liberation Sans', sans-serif;-webkit-text-stroke:0.6px #1f1f1f;letter-spacing:0.6px">Shift score</div>
<div class="t" style="left:2104.3px;top:947px;font-size:31.5px;color:#1f1f1f;font-weight:normal;font-family:'Liberation Sans', sans-serif;-webkit-text-stroke:0.6px #1f1f1f;letter-spacing:0.6px">Elements shifted</div>
<div class="t" style="left:2561.8px;top:947px;font-size:31.5px;color:#1f1f1f;font-weight:normal;font-family:'Liberation Sans', sans-serif;-webkit-text-stroke:0.6px #1f1f1f;letter-spacing:0.6px">Culprit</div>
<div class="t" style="left:1425.4px;top:1033px;font-size:31.9px;color:#0b57d0;font-weight:normal;font-family:'Liberation Sans', sans-serif;text-decoration:underline;text-decoration-thickness:2px;text-underline-offset:5px">Layout shift @ 441.20 ms</div>
<div class="t" style="left:1806px;top:1033px;font-size:31.9px;color:#1f1f1f;font-weight:normal;font-family:'Liberation Sans', sans-serif;">0.0269</div>
<div class="t" style="left:2104.3px;top:992px;font-size:32.2px;color:#1f1f1f;font-weight:normal;font-family:'Liberation Sans', sans-serif;"><span style="color:#d93025">div</span><span style="color:#9c4a0a">.notification__actions</span></div>
<div class="t" style="left:2104.3px;top:1032px;font-size:32.2px;color:#1f1f1f;font-weight:normal;font-family:'Liberation Sans', sans-serif;"><span style="color:#d93025">div</span><span style="color:#9c4a0a">.notification__actions</span></div>
<div class="t" style="left:2104.3px;top:1072px;font-size:32.2px;color:#1f1f1f;font-weight:normal;font-family:'Liberation Sans', sans-serif;"><span style="color:#d93025">div</span><span style="color:#9c4a0a">.gf-full-page.gf-content</span></div>
<div class="t" style="left:2561.8px;top:993px;font-size:31.7px;color:#1f1f1f;font-weight:normal;font-family:'Liberation Sans', sans-serif;">Font request:</div>
<div class="t" style="left:2561.8px;top:1032px;font-size:30.6px;color:#0b57d0;font-weight:normal;font-family:'Liberation Sans', sans-serif;">t5sJIQcYNI…IUI.woff2</div>
<div class="t" style="left:1425.4px;top:1260px;font-size:31.9px;color:#0b57d0;font-weight:normal;font-family:'Liberation Sans', sans-serif;text-decoration:underline;text-decoration-thickness:2px;text-underline-offset:5px">Layout shift @ 457.07 ms</div>
<div class="t" style="left:1806px;top:1260px;font-size:31.9px;color:#1f1f1f;font-weight:normal;font-family:'Liberation Sans', sans-serif;">0.0282</div>
<div class="t" style="left:2104.3px;top:1259px;font-size:32.2px;color:#1f1f1f;font-weight:normal;font-family:'Liberation Sans', sans-serif;"><span style="color:#d93025">mat-sidenav-content</span><span style="color:#9c4a0a">.mat-dr</span><span style="color:#0b57d0">…</span></div>
<div class="t" style="left:2561.8px;top:1119px;font-size:32.1px;color:#1f1f1f;font-weight:normal;font-family:'Liberation Sans', sans-serif;">Non-composited animation:</div>
<div class="t" style="left:2561.8px;top:1160px;font-size:31.5px;color:#0b57d0;font-weight:normal;font-family:'Liberation Sans', sans-serif;text-decoration:underline;text-decoration-thickness:2px;text-underline-offset:5px">Animation</div>
<div class="t" style="left:2561.8px;top:1199px;font-size:32.1px;color:#1f1f1f;font-weight:normal;font-family:'Liberation Sans', sans-serif;">Non-composited animation:</div>
<div class="t" style="left:2561.8px;top:1240px;font-size:31.5px;color:#0b57d0;font-weight:normal;font-family:'Liberation Sans', sans-serif;text-decoration:underline;text-decoration-thickness:2px;text-underline-offset:5px">Animation</div>
<div class="t" style="left:2561.8px;top:1278px;font-size:32.1px;color:#1f1f1f;font-weight:normal;font-family:'Liberation Sans', sans-serif;">Non-composited animation:</div>
<div class="t" style="left:2561.8px;top:1320px;font-size:31.5px;color:#0b57d0;font-weight:normal;font-family:'Liberation Sans', sans-serif;text-decoration:underline;text-decoration-thickness:2px;text-underline-offset:5px">Animation</div>
<div class="t" style="left:2561.8px;top:1358px;font-size:32.1px;color:#1f1f1f;font-weight:normal;font-family:'Liberation Sans', sans-serif;">Non-composited animation:</div>
<div class="t" style="left:2561.8px;top:1400px;font-size:31.5px;color:#0b57d0;font-weight:normal;font-family:'Liberation Sans', sans-serif;text-decoration:underline;text-decoration-thickness:2px;text-underline-offset:5px">Animation</div>
<div class="t" style="left:1425.4px;top:1447px;font-size:31.9px;color:#0b57d0;font-weight:normal;font-family:'Liberation Sans', sans-serif;text-decoration:underline;text-decoration-thickness:2px;text-underline-offset:5px">Layout shift @ 470.53 ms</div>
<div class="t" style="left:1806px;top:1447px;font-size:31.9px;color:#1f1f1f;font-weight:normal;font-family:'Liberation Sans', sans-serif;">0.0270</div>
<div class="t" style="left:2104.3px;top:1446px;font-size:32.2px;color:#1f1f1f;font-weight:normal;font-family:'Liberation Sans', sans-serif;"><span style="color:#d93025">mat-sidenav-content</span><span style="color:#9c4a0a">.mat-dr</span><span style="color:#0b57d0">…</span></div>
<div class="t" style="left:1425.4px;top:1494px;font-size:31.9px;color:#0b57d0;font-weight:normal;font-family:'Liberation Sans', sans-serif;text-decoration:underline;text-decoration-thickness:2px;text-underline-offset:5px">Layout shift @ 486.54 ms</div>
<div class="t" style="left:1806px;top:1494px;font-size:31.9px;color:#1f1f1f;font-weight:normal;font-family:'Liberation Sans', sans-serif;">0.0251</div>
<div class="t" style="left:2104.3px;top:1493px;font-size:32.2px;color:#1f1f1f;font-weight:normal;font-family:'Liberation Sans', sans-serif;"><span style="color:#d93025">mat-sidenav-content</span><span style="color:#9c4a0a">.mat-dr</span><span style="color:#0b57d0">…</span></div>
<div class="t" style="left:1425.4px;top:1541px;font-size:31.9px;color:#0b57d0;font-weight:normal;font-family:'Liberation Sans', sans-serif;text-decoration:underline;text-decoration-thickness:2px;text-underline-offset:5px">Layout shift @ 503.26 ms</div>
<div class="t" style="left:1806px;top:1541px;font-size:31.9px;color:#1f1f1f;font-weight:normal;font-family:'Liberation Sans', sans-serif;">0.0228</div>
<div class="t" style="left:2104.3px;top:1540px;font-size:32.2px;color:#1f1f1f;font-weight:normal;font-family:'Liberation Sans', sans-serif;"><span style="color:#d93025">mat-sidenav-content</span><span style="color:#9c4a0a">.mat-dr</span><span style="color:#0b57d0">…</span></div>
<div class="t" style="left:1425.4px;top:1588px;font-size:31.9px;color:#0b57d0;font-weight:normal;font-family:'Liberation Sans', sans-serif;text-decoration:underline;text-decoration-thickness:2px;text-underline-offset:5px">Layout shift @ 521.16 ms</div>
<div class="t" style="left:1806px;top:1588px;font-size:31.9px;color:#1f1f1f;font-weight:normal;font-family:'Liberation Sans', sans-serif;">0.0203</div>
<div class="t" style="left:2104.3px;top:1587px;font-size:32.2px;color:#1f1f1f;font-weight:normal;font-family:'Liberation Sans', sans-serif;"><span style="color:#d93025">mat-sidenav-content</span><span style="color:#9c4a0a">.mat-dr</span><span style="color:#0b57d0">…</span></div>
<div class="t" style="left:1425.4px;top:1635px;font-size:31.9px;color:#0b57d0;font-weight:normal;font-family:'Liberation Sans', sans-serif;text-decoration:underline;text-decoration-thickness:2px;text-underline-offset:5px">Layout shift @ 545.09 ms</div>
<div class="t" style="left:1806px;top:1635px;font-size:31.9px;color:#1f1f1f;font-weight:normal;font-family:'Liberation Sans', sans-serif;">0.0142</div>
<div class="t" style="left:2104.3px;top:1634px;font-size:32.2px;color:#1f1f1f;font-weight:normal;font-family:'Liberation Sans', sans-serif;"><span style="color:#d93025">mat-sidenav-content</span><span style="color:#9c4a0a">.mat-dr</span><span style="color:#0b57d0">…</span></div>
<div class="t" style="left:1425.4px;top:1682px;font-size:31.9px;color:#0b57d0;font-weight:normal;font-family:'Liberation Sans', sans-serif;text-decoration:underline;text-decoration-thickness:2px;text-underline-offset:5px">Layout shift @ 554.05 ms</div>
<div class="t" style="left:1806px;top:1682px;font-size:31.9px;color:#1f1f1f;font-weight:normal;font-family:'Liberation Sans', sans-serif;">0.0118</div>
<div class="t" style="left:2104.3px;top:1681px;font-size:32.2px;color:#1f1f1f;font-weight:normal;font-family:'Liberation Sans', sans-serif;"><span style="color:#d93025">mat-sidenav-content</span><span style="color:#9c4a0a">.mat-dr</span><span style="color:#0b57d0">…</span></div>
<div class="t" style="left:1425.4px;top:1748px;font-size:31.9px;color:#0b57d0;font-weight:normal;font-family:'Liberation Sans', sans-serif;text-decoration:underline;text-decoration-thickness:2px;text-underline-offset:5px">Layout shift @ 570.53 ms</div>
<div class="t" style="left:1806px;top:1748px;font-size:31.9px;color:#1f1f1f;font-weight:normal;font-family:'Liberation Sans', sans-serif;">0.0083</div>
<div class="t" style="left:2104.3px;top:1747px;font-size:32.2px;color:#1f1f1f;font-weight:normal;font-family:'Liberation Sans', sans-serif;"><span style="color:#d93025">mat-sidenav-content</span><span style="color:#9c4a0a">.mat-dr</span><span style="color:#0b57d0">…</span></div>
<div class="t" style="left:2561.8px;top:1729px;font-size:31.7px;color:#1f1f1f;font-weight:normal;font-family:'Liberation Sans', sans-serif;">Font request:</div>
<div class="t" style="left:2561.8px;top:1769px;font-size:31.2px;color:#0b57d0;font-weight:normal;font-family:'Liberation Sans', sans-serif;">HhzMU5Ak9u…p9M.woff2</div>
<div class="t" style="left:1425.4px;top:1815px;font-size:31.9px;color:#0b57d0;font-weight:normal;font-family:'Liberation Sans', sans-serif;text-decoration:underline;text-decoration-thickness:2px;text-underline-offset:5px">Layout shift @ 588.68 ms</div>
<div class="t" style="left:1806px;top:1815px;font-size:31.9px;color:#1f1f1f;font-weight:normal;font-family:'Liberation Sans', sans-serif;">0.0000</div>
<div class="t" style="left:2104.3px;top:1814px;font-size:32.2px;color:#1f1f1f;font-weight:normal;font-family:'Liberation Sans', sans-serif;"><span style="color:#d93025">button</span><span style="color:#0b57d0">#feedback-button</span><span style="color:#9c4a0a">.fee</span><span style="color:#0b57d0">…</span></div>
<div class="t" style="left:1425.4px;top:1862px;font-size:31.9px;color:#0b57d0;font-weight:normal;font-family:'Liberation Sans', sans-serif;text-decoration:underline;text-decoration-thickness:2px;text-underline-offset:5px">Layout shift @ 604.01 ms</div>
<div class="t" style="left:1806px;top:1862px;font-size:31.9px;color:#1f1f1f;font-weight:normal;font-family:'Liberation Sans', sans-serif;">0.0049</div>
<div class="t" style="left:2104.3px;top:1861px;font-size:32.2px;color:#1f1f1f;font-weight:normal;font-family:'Liberation Sans', sans-serif;"><span style="color:#d93025">mat-sidenav-content</span><span style="color:#9c4a0a">.mat-dr</span><span style="color:#0b57d0">…</span></div>
<div class="t" style="left:1425.4px;top:1910px;font-size:31.5px;color:#1f1f1f;font-weight:normal;font-family:'Liberation Sans', sans-serif;-webkit-text-stroke:0.6px #1f1f1f;letter-spacing:0.6px">Total</div>
<div class="t" style="left:1806px;top:1910px;font-size:31.9px;color:#1f1f1f;font-weight:normal;font-family:'Liberation Sans', sans-serif;">0.1896</div>
</div></div></body></html>
